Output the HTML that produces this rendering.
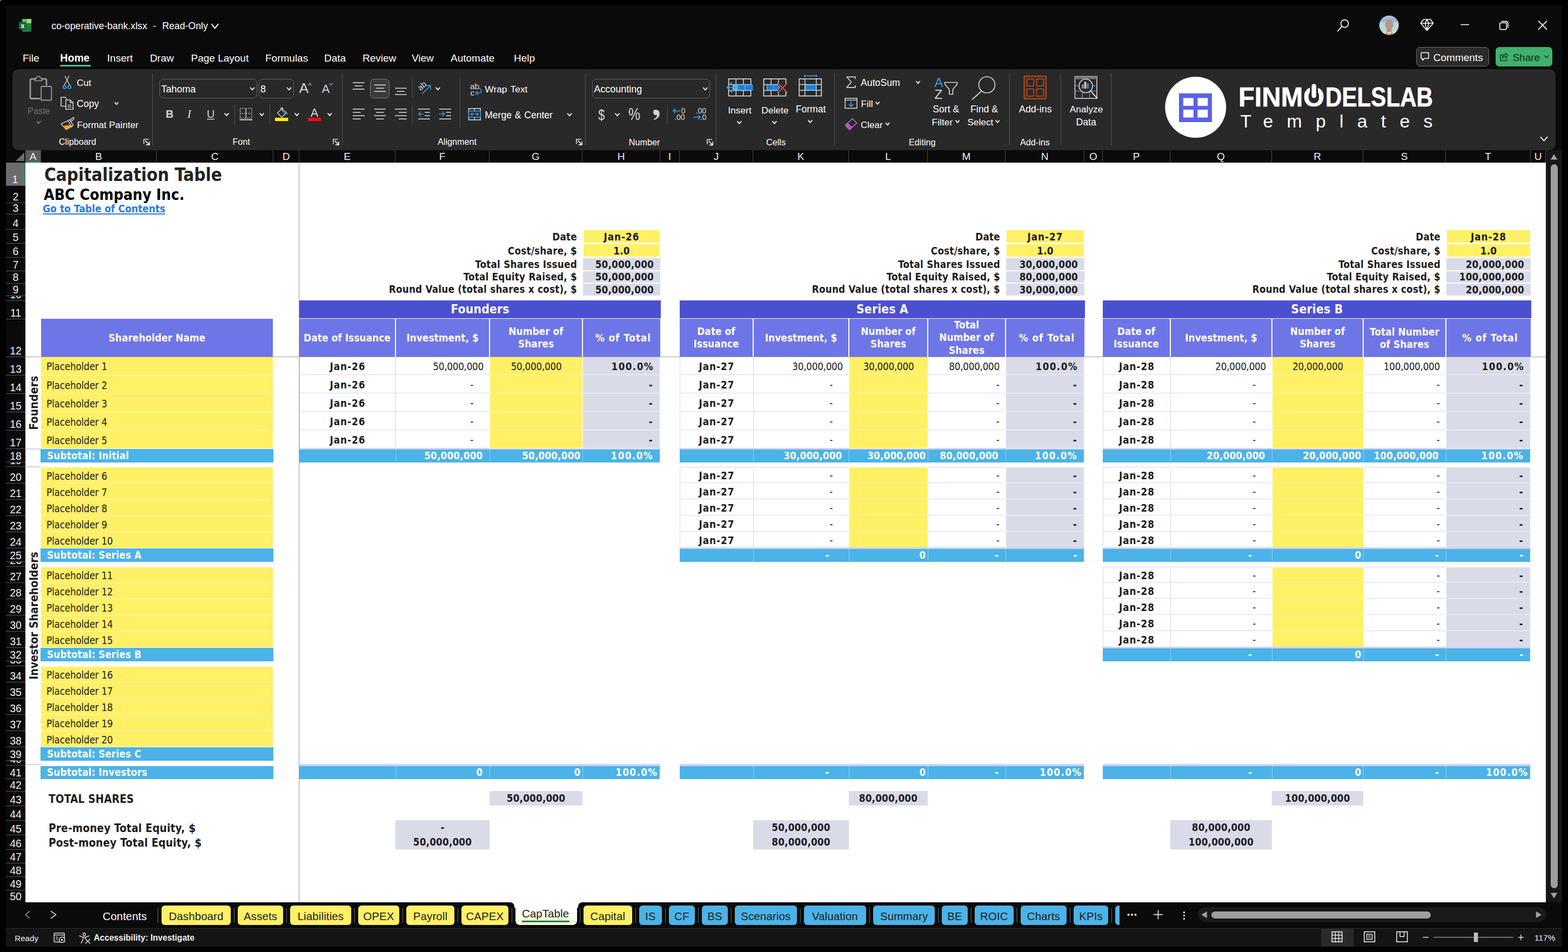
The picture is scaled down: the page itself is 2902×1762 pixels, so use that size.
<!DOCTYPE html>
<html lang="en"><head><meta charset="utf-8"><title>co-operative-bank.xlsx - Excel</title>
<style>
*{box-sizing:border-box;margin:0;padding:0}
html,body{width:2902px;height:1762px;overflow:hidden;background:#000}
body{position:relative;font-family:"Liberation Sans",sans-serif;color:#fff}
.abs{position:absolute}
#win{position:absolute;left:11px;top:10px;width:2880px;height:1742px;background:#0a0a0a;overflow:hidden}
#sheet{position:absolute;left:47px;top:301px;width:2814px;height:1369px;background:#fff;overflow:hidden;font-family:"DejaVu Sans Condensed","DejaVu Sans",sans-serif;font-stretch:condensed;font-size:18.7px;color:#1c1c1c}
.c{position:absolute;display:flex;align-items:center;justify-content:center;white-space:nowrap;line-height:1;overflow:visible;padding-top:4px;letter-spacing:0.2px}
.d{padding-top:5.5px}
.j{letter-spacing:1.0px}
.pc{letter-spacing:1.4px}
.b{font-weight:bold}
.r{justify-content:flex-end}
.l{justify-content:flex-start}
.bot{align-items:flex-end;padding-top:0}
.w{color:#fff}
.n{letter-spacing:-0.25px}
.hd{background:#6e75e7;color:#fff;font-weight:bold;text-align:center;white-space:normal;line-height:23.5px;font-size:18.9px;padding-top:2px;letter-spacing:0.05px}
.yl{background:#fff066}
.gy{background:#d9dbe9}
.bl{background:#4bb3e7;color:#fff;font-weight:bold}
.ch{position:absolute;top:278px;height:23px;color:#f0f0f0;font-size:19px;line-height:23px;text-align:center;border-right:1px solid #4a4a4a}
.rh{position:absolute;left:11px;width:36px;color:#f0f0f0;font-size:19.5px;text-align:center;border-bottom:1px solid #555;overflow:hidden}
.t{position:absolute;white-space:nowrap}
.tab{position:absolute;top:1676px;height:35.5px;border-radius:6px;color:#1c1c1c;font-size:20.4px;line-height:20.4px;text-align:center;padding-top:9.6px;white-space:nowrap;letter-spacing:0.15px}
.rh span{position:absolute;left:0;right:0;bottom:1px;line-height:20px}
</style></head><body>
<div id="win"></div>

<div class="abs" style="left:11px;top:278px;width:2850px;height:23px;background:#0a0a0a"></div>
<div class="ch" style="left:47px;width:29px;background:#5c5c5c;border-bottom:2px solid #1e8f4e;">A</div>
<div class="ch" style="left:76px;width:214px;">B</div>
<div class="ch" style="left:290px;width:216px;">C</div>
<div class="ch" style="left:506px;width:48px;">D</div>
<div class="ch" style="left:554px;width:178px;">E</div>
<div class="ch" style="left:732px;width:174px;">F</div>
<div class="ch" style="left:906px;width:172px;">G</div>
<div class="ch" style="left:1078px;width:144px;">H</div>
<div class="ch" style="left:1222px;width:36px;">I</div>
<div class="ch" style="left:1258px;width:136px;">J</div>
<div class="ch" style="left:1394px;width:177px;">K</div>
<div class="ch" style="left:1571px;width:146px;">L</div>
<div class="ch" style="left:1717px;width:144px;">M</div>
<div class="ch" style="left:1861px;width:146px;">N</div>
<div class="ch" style="left:2007px;width:34px;">O</div>
<div class="ch" style="left:2041px;width:125px;">P</div>
<div class="ch" style="left:2166px;width:188px;">Q</div>
<div class="ch" style="left:2354px;width:169px;">R</div>
<div class="ch" style="left:2523px;width:153px;">S</div>
<div class="ch" style="left:2676px;width:157px;">T</div>
<div class="ch" style="left:2833px;width:28px;">U</div>
<svg class="abs" style="left:28px;top:281px" width="18" height="18"><path d="M17 1 L17 17 L1 17 Z" fill="#6a6a6a"/></svg>
<div class="rh" style="top:301px;height:43px;background:#6b6b6b;border-right:2px solid #1e8f4e;"><span>1</span></div>
<div class="rh" style="top:344px;height:32px;"><span>2</span></div>
<div class="rh" style="top:376px;height:21px;"><span>3</span></div>
<div class="rh" style="top:397px;height:28px;"><span>4</span></div>
<div class="rh" style="top:425px;height:26px;"><span>5</span></div>
<div class="rh" style="top:451px;height:26px;"><span>6</span></div>
<div class="rh" style="top:477px;height:25px;"><span>7</span></div>
<div class="rh" style="top:502px;height:23px;"><span>8</span></div>
<div class="rh" style="top:525px;height:23px;"><span>9</span></div>
<div class="rh" style="top:548px;height:9px;"><span>10</span></div>
<div class="rh" style="top:557px;height:34px;"><span>11</span></div>
<div class="rh" style="top:591px;height:70px;"><span>12</span></div>
<div class="rh" style="top:661px;height:34px;"><span>13</span></div>
<div class="rh" style="top:695px;height:34px;"><span>14</span></div>
<div class="rh" style="top:729px;height:34px;"><span>15</span></div>
<div class="rh" style="top:763px;height:34px;"><span>16</span></div>
<div class="rh" style="top:797px;height:34px;"><span>17</span></div>
<div class="rh" style="top:831px;height:25px;"><span>18</span></div>
<div class="rh" style="top:856px;height:8px;"><span>19</span></div>
<div class="rh" style="top:864px;height:31px;"><span>20</span></div>
<div class="rh" style="top:895px;height:30px;"><span>21</span></div>
<div class="rh" style="top:925px;height:30px;"><span>22</span></div>
<div class="rh" style="top:955px;height:30px;"><span>23</span></div>
<div class="rh" style="top:985px;height:30px;"><span>24</span></div>
<div class="rh" style="top:1015px;height:25px;"><span>25</span></div>
<div class="rh" style="top:1040px;height:9px;"><span>26</span></div>
<div class="rh" style="top:1049px;height:30px;"><span>27</span></div>
<div class="rh" style="top:1079px;height:30px;"><span>28</span></div>
<div class="rh" style="top:1109px;height:30px;"><span>29</span></div>
<div class="rh" style="top:1139px;height:30px;"><span>30</span></div>
<div class="rh" style="top:1169px;height:30px;"><span>31</span></div>
<div class="rh" style="top:1199px;height:25px;"><span>32</span></div>
<div class="rh" style="top:1224px;height:9px;"><span>33</span></div>
<div class="rh" style="top:1233px;height:30px;"><span>34</span></div>
<div class="rh" style="top:1263px;height:30px;"><span>35</span></div>
<div class="rh" style="top:1293px;height:30px;"><span>36</span></div>
<div class="rh" style="top:1323px;height:30px;"><span>37</span></div>
<div class="rh" style="top:1353px;height:30px;"><span>38</span></div>
<div class="rh" style="top:1383px;height:25px;"><span>39</span></div>
<div class="rh" style="top:1408px;height:9px;"><span>40</span></div>
<div class="rh" style="top:1417px;height:25px;"><span>41</span></div>
<div class="rh" style="top:1442px;height:23px;"><span>42</span></div>
<div class="rh" style="top:1465px;height:27px;"><span>43</span></div>
<div class="rh" style="top:1492px;height:27px;"><span>44</span></div>
<div class="rh" style="top:1519px;height:27px;"><span>45</span></div>
<div class="rh" style="top:1546px;height:27px;"><span>46</span></div>
<div class="rh" style="top:1573px;height:25px;"><span>47</span></div>
<div class="rh" style="top:1598px;height:25px;"><span>48</span></div>
<div class="rh" style="top:1623px;height:25px;"><span>49</span></div>
<div class="rh" style="top:1648px;height:23px;"><span>50</span></div>
<div id="sheet">
<div class="c b l bot" style="left:29px;top:0px;width:430px;height:42px;font-size:33px;padding-left:6px;padding-bottom:3px;color:#222;letter-spacing:0">Capitalization Table</div>
<div class="c b l bot" style="left:29px;top:42px;width:430px;height:32px;font-size:28.2px;padding-left:5px;padding-bottom:0px;color:#000;letter-spacing:0.05px">ABC Company Inc.</div>
<div class="c b l bot" style="left:29px;top:74px;width:430px;height:21px;font-size:19.1px;padding-left:3px;color:#2a7ae8;letter-spacing:0"><span style="text-decoration:underline;text-decoration-thickness:2px;text-underline-offset:2px">Go to Table of Contents</span></div>
<div class="c b r bot" style="left:507px;top:123px;width:524px;height:26px;padding-right:10px;padding-bottom:1px;letter-spacing:0.24px">Date</div>
<div class="c b yl bot j" style="left:1033px;top:125px;width:141px;height:23px;padding-bottom:0px">Jan-26</div>
<div class="c b r bot" style="left:507px;top:149px;width:524px;height:26px;padding-right:10px;padding-bottom:1px;letter-spacing:0.24px">Cost/share, $</div>
<div class="c b yl bot" style="left:1033px;top:151px;width:141px;height:23px;padding-bottom:0px">1.0</div>
<div class="c b r bot" style="left:507px;top:175px;width:524px;height:25px;padding-right:10px;padding-bottom:1px;letter-spacing:0.24px">Total Shares Issued</div>
<div class="c b gy r bot" style="left:1032px;top:177px;width:143px;height:22px;padding-right:12px;padding-bottom:0px">50,000,000</div>
<div class="c b r bot" style="left:507px;top:200px;width:524px;height:23px;padding-right:10px;padding-bottom:1px;letter-spacing:0.24px">Total Equity Raised, $</div>
<div class="c b gy r bot" style="left:1032px;top:201px;width:143px;height:21px;padding-right:12px;padding-bottom:0px">50,000,000</div>
<div class="c b r bot" style="left:507px;top:223px;width:524px;height:23px;padding-right:10px;padding-bottom:1px;letter-spacing:0.24px">Round Value (total shares x cost), $</div>
<div class="c b gy r bot" style="left:1032px;top:224px;width:143px;height:21.5px;padding-right:12px;padding-bottom:0px">50,000,000</div>
<div class="c b w" style="left:507px;top:255px;width:668px;height:34px;background:#4b50d0;font-size:22.7px;height:32.5px;padding-top:1px;width:669px">Founders</div>
<div class="c b r bot" style="left:1211px;top:123px;width:603px;height:26px;padding-right:10px;padding-bottom:1px;letter-spacing:0.24px">Date</div>
<div class="c b yl bot j" style="left:1816px;top:125px;width:143px;height:23px;padding-bottom:0px">Jan-27</div>
<div class="c b r bot" style="left:1211px;top:149px;width:603px;height:26px;padding-right:10px;padding-bottom:1px;letter-spacing:0.24px">Cost/share, $</div>
<div class="c b yl bot" style="left:1816px;top:151px;width:143px;height:23px;padding-bottom:0px">1.0</div>
<div class="c b r bot" style="left:1211px;top:175px;width:603px;height:25px;padding-right:10px;padding-bottom:1px;letter-spacing:0.24px">Total Shares Issued</div>
<div class="c b gy r bot" style="left:1815px;top:177px;width:145px;height:22px;padding-right:12px;padding-bottom:0px">30,000,000</div>
<div class="c b r bot" style="left:1211px;top:200px;width:603px;height:23px;padding-right:10px;padding-bottom:1px;letter-spacing:0.24px">Total Equity Raised, $</div>
<div class="c b gy r bot" style="left:1815px;top:201px;width:145px;height:21px;padding-right:12px;padding-bottom:0px">80,000,000</div>
<div class="c b r bot" style="left:1211px;top:223px;width:603px;height:23px;padding-right:10px;padding-bottom:1px;letter-spacing:0.24px">Round Value (total shares x cost), $</div>
<div class="c b gy r bot" style="left:1815px;top:224px;width:145px;height:21.5px;padding-right:12px;padding-bottom:0px">30,000,000</div>
<div class="c b w" style="left:1211px;top:255px;width:749px;height:34px;background:#4b50d0;font-size:22.7px;height:32.5px;padding-top:1px;width:750px">Series A</div>
<div class="c b r bot" style="left:1994px;top:123px;width:635px;height:26px;padding-right:10px;padding-bottom:1px;letter-spacing:0.24px">Date</div>
<div class="c b yl bot j" style="left:2631px;top:125px;width:154px;height:23px;padding-bottom:0px">Jan-28</div>
<div class="c b r bot" style="left:1994px;top:149px;width:635px;height:26px;padding-right:10px;padding-bottom:1px;letter-spacing:0.24px">Cost/share, $</div>
<div class="c b yl bot" style="left:2631px;top:151px;width:154px;height:23px;padding-bottom:0px">1.0</div>
<div class="c b r bot" style="left:1994px;top:175px;width:635px;height:25px;padding-right:10px;padding-bottom:1px;letter-spacing:0.24px">Total Shares Issued</div>
<div class="c b gy r bot" style="left:2630px;top:177px;width:156px;height:22px;padding-right:12px;padding-bottom:0px">20,000,000</div>
<div class="c b r bot" style="left:1994px;top:200px;width:635px;height:23px;padding-right:10px;padding-bottom:1px;letter-spacing:0.24px">Total Equity Raised, $</div>
<div class="c b gy r bot" style="left:2630px;top:201px;width:156px;height:21px;padding-right:12px;padding-bottom:0px">100,000,000</div>
<div class="c b r bot" style="left:1994px;top:223px;width:635px;height:23px;padding-right:10px;padding-bottom:1px;letter-spacing:0.24px">Round Value (total shares x cost), $</div>
<div class="c b gy r bot" style="left:2630px;top:224px;width:156px;height:21.5px;padding-right:12px;padding-bottom:0px">20,000,000</div>
<div class="c b w" style="left:1994px;top:255px;width:792px;height:34px;background:#4b50d0;font-size:22.7px;height:32.5px;padding-top:1px;width:793px">Series B</div>
<div class="c hd" style="left:29px;top:289px;width:429px;height:70px;">Shareholder Name</div>
<div class="c hd" style="left:507px;top:289px;width:177px;height:70px;">Date of Issuance</div>
<div class="c hd" style="left:686px;top:289px;width:172px;height:70px;">Investment, $</div>
<div class="c hd" style="left:860px;top:289px;width:170px;height:70px;padding:0 30px;">Number of Shares</div>
<div class="c hd" style="left:1032px;top:289px;width:142.7px;height:70px;letter-spacing:0.9px;padding-left:6px;">% of Total</div>
<div class="c hd" style="left:1211px;top:289px;width:135px;height:70px;padding:0 22px;">Date of Issuance</div>
<div class="c hd" style="left:1348px;top:289px;width:175px;height:70px;">Investment, $</div>
<div class="c hd" style="left:1525px;top:289px;width:144px;height:70px;padding:0 16px;">Number of Shares</div>
<div class="c hd" style="left:1671px;top:289px;width:142px;height:70px;padding:0 12px;">Total Number of Shares</div>
<div class="c hd" style="left:1815px;top:289px;width:144.7px;height:70px;letter-spacing:0.9px;padding-left:6px;">% of Total</div>
<div class="c hd" style="left:1994px;top:289px;width:124px;height:70px;padding:0 22px;">Date of Issuance</div>
<div class="c hd" style="left:2120px;top:289px;width:186px;height:70px;">Investment, $</div>
<div class="c hd" style="left:2308px;top:289px;width:167px;height:70px;padding:0 30px;">Number of Shares</div>
<div class="c hd" style="left:2477px;top:289px;width:151px;height:70px;">Total Number of Shares</div>
<div class="c hd" style="left:2630px;top:289px;width:155.7px;height:70px;letter-spacing:0.9px;padding-left:6px;">% of Total</div>
<div class="c yl l d" style="left:29px;top:359px;width:429px;height:34px;padding-left:10px;letter-spacing:-0.15px;">Placeholder 1</div>
<div class="c yl l d" style="left:29px;top:393px;width:429px;height:34px;padding-left:10px;letter-spacing:-0.15px;border-top:1px solid #fff9c4;">Placeholder 2</div>
<div class="c yl l d" style="left:29px;top:427px;width:429px;height:34px;padding-left:10px;letter-spacing:-0.15px;border-top:1px solid #fff9c4;">Placeholder 3</div>
<div class="c yl l d" style="left:29px;top:461px;width:429px;height:34px;padding-left:10px;letter-spacing:-0.15px;border-top:1px solid #fff9c4;">Placeholder 4</div>
<div class="c yl l d" style="left:29px;top:495px;width:429px;height:34px;padding-left:10px;letter-spacing:-0.15px;border-top:1px solid #fff9c4;">Placeholder 5</div>
<div class="c yl l d" style="left:29px;top:563.5px;width:429px;height:29.5px;padding-left:10px;letter-spacing:-0.15px;">Placeholder 6</div>
<div class="c yl l d" style="left:29px;top:593px;width:429px;height:30px;padding-left:10px;letter-spacing:-0.15px;border-top:1px solid #fff9c4;">Placeholder 7</div>
<div class="c yl l d" style="left:29px;top:623px;width:429px;height:30px;padding-left:10px;letter-spacing:-0.15px;border-top:1px solid #fff9c4;">Placeholder 8</div>
<div class="c yl l d" style="left:29px;top:653px;width:429px;height:30px;padding-left:10px;letter-spacing:-0.15px;border-top:1px solid #fff9c4;">Placeholder 9</div>
<div class="c yl l d" style="left:29px;top:683px;width:429px;height:30px;padding-left:10px;letter-spacing:-0.15px;border-top:1px solid #fff9c4;">Placeholder 10</div>
<div class="c yl l d" style="left:29px;top:748.5px;width:429px;height:28.5px;padding-left:10px;letter-spacing:-0.15px;">Placeholder 11</div>
<div class="c yl l d" style="left:29px;top:777px;width:429px;height:30px;padding-left:10px;letter-spacing:-0.15px;border-top:1px solid #fff9c4;">Placeholder 12</div>
<div class="c yl l d" style="left:29px;top:807px;width:429px;height:30px;padding-left:10px;letter-spacing:-0.15px;border-top:1px solid #fff9c4;">Placeholder 13</div>
<div class="c yl l d" style="left:29px;top:837px;width:429px;height:30px;padding-left:10px;letter-spacing:-0.15px;border-top:1px solid #fff9c4;">Placeholder 14</div>
<div class="c yl l d" style="left:29px;top:867px;width:429px;height:30px;padding-left:10px;letter-spacing:-0.15px;border-top:1px solid #fff9c4;">Placeholder 15</div>
<div class="c yl l d" style="left:29px;top:932.5px;width:429px;height:28.5px;padding-left:10px;letter-spacing:-0.15px;">Placeholder 16</div>
<div class="c yl l d" style="left:29px;top:961px;width:429px;height:30px;padding-left:10px;letter-spacing:-0.15px;border-top:1px solid #fff9c4;">Placeholder 17</div>
<div class="c yl l d" style="left:29px;top:991px;width:429px;height:30px;padding-left:10px;letter-spacing:-0.15px;border-top:1px solid #fff9c4;">Placeholder 18</div>
<div class="c yl l d" style="left:29px;top:1021px;width:429px;height:30px;padding-left:10px;letter-spacing:-0.15px;border-top:1px solid #fff9c4;">Placeholder 19</div>
<div class="c yl l d" style="left:29px;top:1051px;width:429px;height:30px;padding-left:10px;letter-spacing:-0.15px;border-top:1px solid #fff9c4;">Placeholder 20</div>
<div class="c bl l" style="left:29px;top:530px;width:430px;height:24.5px;padding-left:12px;padding-top:2px;left:28px;width:431px">Subtotal: Initial</div>
<div class="c bl l" style="left:29px;top:714px;width:430px;height:24.5px;padding-left:12px;padding-top:2px;left:28px;width:431px">Subtotal: Series A</div>
<div class="c bl l" style="left:29px;top:898px;width:430px;height:24.5px;padding-left:12px;padding-top:2px;left:28px;width:431px">Subtotal: Series B</div>
<div class="c bl l" style="left:29px;top:1082px;width:430px;height:24.5px;padding-left:12px;padding-top:2px;left:28px;width:431px">Subtotal: Series C</div>
<div class="c bl l" style="left:29px;top:1117px;width:430px;height:23.5px;padding-left:12px;padding-top:2px;left:28px;width:431px">Subtotal: Investors</div>
<div class="c b" style="left:0px;top:359px;width:29px;height:170px;font-size:21px;padding:0px 0 0 3px"><span style="transform:rotate(-90deg);display:block;letter-spacing:0.2px">Founders</span></div>
<div class="c b" style="left:0px;top:562px;width:29px;height:544px;font-size:21px;padding:8px 0 0 3px"><span style="transform:rotate(-90deg);display:block;letter-spacing:0px">Investor Shareholders</span></div>
<div class="c b d j" style="left:507px;top:359px;width:178px;height:34px;border-bottom:1px solid #d6d9ef;border-left:1px solid #d6d9ef;">Jan-26</div>
<div class="c r n d" style="left:685px;top:359px;width:174px;height:34px;border-bottom:1px solid #d6d9ef;border-left:1px solid #d6d9ef;padding-right:11px">50,000,000</div>
<div class="c yl n d" style="left:860px;top:359px;width:171px;height:34px;border-bottom:1px solid #fff9c4">50,000,000</div>
<div class="c gy b r d pc" style="left:1032px;top:359px;width:142px;height:34px;border-bottom:1px solid #f4f5fb;padding-right:11px">100.0%</div>
<div class="c b d j" style="left:1211px;top:359px;width:136px;height:34px;border-bottom:1px solid #d6d9ef;border-left:1px solid #d6d9ef;">Jan-27</div>
<div class="c r n d" style="left:1347px;top:359px;width:177px;height:34px;border-bottom:1px solid #d6d9ef;border-left:1px solid #d6d9ef;padding-right:11px">30,000,000</div>
<div class="c yl n d" style="left:1525px;top:359px;width:145px;height:34px;border-bottom:1px solid #fff9c4">30,000,000</div>
<div class="c r n d" style="left:1670px;top:359px;width:144px;height:34px;border-bottom:1px solid #d6d9ef;padding-right:11px">80,000,000</div>
<div class="c gy b r d pc" style="left:1815px;top:359px;width:144px;height:34px;border-bottom:1px solid #f4f5fb;padding-right:11px">100.0%</div>
<div class="c b d j" style="left:1994px;top:359px;width:125px;height:34px;border-bottom:1px solid #d6d9ef;border-left:1px solid #d6d9ef;">Jan-28</div>
<div class="c r n d" style="left:2119px;top:359px;width:188px;height:34px;border-bottom:1px solid #d6d9ef;border-left:1px solid #d6d9ef;padding-right:11px">20,000,000</div>
<div class="c yl n d" style="left:2308px;top:359px;width:168px;height:34px;border-bottom:1px solid #fff9c4">20,000,000</div>
<div class="c r n d" style="left:2476px;top:359px;width:153px;height:34px;border-bottom:1px solid #d6d9ef;padding-right:11px">100,000,000</div>
<div class="c gy b r d pc" style="left:2630px;top:359px;width:155px;height:34px;border-bottom:1px solid #f4f5fb;padding-right:11px">100.0%</div>
<div class="c b d j" style="left:507px;top:393px;width:178px;height:34px;border-bottom:1px solid #d6d9ef;border-left:1px solid #d6d9ef;">Jan-26</div>
<div class="c r n d" style="left:685px;top:393px;width:174px;height:34px;border-bottom:1px solid #d6d9ef;border-left:1px solid #d6d9ef;padding-right:30px">-</div>
<div class="c yl n d" style="left:860px;top:393px;width:171px;height:34px;border-bottom:1px solid #fff9c4"></div>
<div class="c gy b r d" style="left:1032px;top:393px;width:142px;height:34px;border-bottom:1px solid #f4f5fb;padding-right:13px">-</div>
<div class="c b d j" style="left:1211px;top:393px;width:136px;height:34px;border-bottom:1px solid #d6d9ef;border-left:1px solid #d6d9ef;">Jan-27</div>
<div class="c r n d" style="left:1347px;top:393px;width:177px;height:34px;border-bottom:1px solid #d6d9ef;border-left:1px solid #d6d9ef;padding-right:30px">-</div>
<div class="c yl n d" style="left:1525px;top:393px;width:145px;height:34px;border-bottom:1px solid #fff9c4"></div>
<div class="c r n d" style="left:1670px;top:393px;width:144px;height:34px;border-bottom:1px solid #d6d9ef;padding-right:11.5px">-</div>
<div class="c gy b r d" style="left:1815px;top:393px;width:144px;height:34px;border-bottom:1px solid #f4f5fb;padding-right:13px">-</div>
<div class="c b d j" style="left:1994px;top:393px;width:125px;height:34px;border-bottom:1px solid #d6d9ef;border-left:1px solid #d6d9ef;">Jan-28</div>
<div class="c r n d" style="left:2119px;top:393px;width:188px;height:34px;border-bottom:1px solid #d6d9ef;border-left:1px solid #d6d9ef;padding-right:30px">-</div>
<div class="c yl n d" style="left:2308px;top:393px;width:168px;height:34px;border-bottom:1px solid #fff9c4"></div>
<div class="c r n d" style="left:2476px;top:393px;width:153px;height:34px;border-bottom:1px solid #d6d9ef;padding-right:11.5px">-</div>
<div class="c gy b r d" style="left:2630px;top:393px;width:155px;height:34px;border-bottom:1px solid #f4f5fb;padding-right:13px">-</div>
<div class="c b d j" style="left:507px;top:427px;width:178px;height:34px;border-bottom:1px solid #d6d9ef;border-left:1px solid #d6d9ef;">Jan-26</div>
<div class="c r n d" style="left:685px;top:427px;width:174px;height:34px;border-bottom:1px solid #d6d9ef;border-left:1px solid #d6d9ef;padding-right:30px">-</div>
<div class="c yl n d" style="left:860px;top:427px;width:171px;height:34px;border-bottom:1px solid #fff9c4"></div>
<div class="c gy b r d" style="left:1032px;top:427px;width:142px;height:34px;border-bottom:1px solid #f4f5fb;padding-right:13px">-</div>
<div class="c b d j" style="left:1211px;top:427px;width:136px;height:34px;border-bottom:1px solid #d6d9ef;border-left:1px solid #d6d9ef;">Jan-27</div>
<div class="c r n d" style="left:1347px;top:427px;width:177px;height:34px;border-bottom:1px solid #d6d9ef;border-left:1px solid #d6d9ef;padding-right:30px">-</div>
<div class="c yl n d" style="left:1525px;top:427px;width:145px;height:34px;border-bottom:1px solid #fff9c4"></div>
<div class="c r n d" style="left:1670px;top:427px;width:144px;height:34px;border-bottom:1px solid #d6d9ef;padding-right:11.5px">-</div>
<div class="c gy b r d" style="left:1815px;top:427px;width:144px;height:34px;border-bottom:1px solid #f4f5fb;padding-right:13px">-</div>
<div class="c b d j" style="left:1994px;top:427px;width:125px;height:34px;border-bottom:1px solid #d6d9ef;border-left:1px solid #d6d9ef;">Jan-28</div>
<div class="c r n d" style="left:2119px;top:427px;width:188px;height:34px;border-bottom:1px solid #d6d9ef;border-left:1px solid #d6d9ef;padding-right:30px">-</div>
<div class="c yl n d" style="left:2308px;top:427px;width:168px;height:34px;border-bottom:1px solid #fff9c4"></div>
<div class="c r n d" style="left:2476px;top:427px;width:153px;height:34px;border-bottom:1px solid #d6d9ef;padding-right:11.5px">-</div>
<div class="c gy b r d" style="left:2630px;top:427px;width:155px;height:34px;border-bottom:1px solid #f4f5fb;padding-right:13px">-</div>
<div class="c b d j" style="left:507px;top:461px;width:178px;height:34px;border-bottom:1px solid #d6d9ef;border-left:1px solid #d6d9ef;">Jan-26</div>
<div class="c r n d" style="left:685px;top:461px;width:174px;height:34px;border-bottom:1px solid #d6d9ef;border-left:1px solid #d6d9ef;padding-right:30px">-</div>
<div class="c yl n d" style="left:860px;top:461px;width:171px;height:34px;border-bottom:1px solid #fff9c4"></div>
<div class="c gy b r d" style="left:1032px;top:461px;width:142px;height:34px;border-bottom:1px solid #f4f5fb;padding-right:13px">-</div>
<div class="c b d j" style="left:1211px;top:461px;width:136px;height:34px;border-bottom:1px solid #d6d9ef;border-left:1px solid #d6d9ef;">Jan-27</div>
<div class="c r n d" style="left:1347px;top:461px;width:177px;height:34px;border-bottom:1px solid #d6d9ef;border-left:1px solid #d6d9ef;padding-right:30px">-</div>
<div class="c yl n d" style="left:1525px;top:461px;width:145px;height:34px;border-bottom:1px solid #fff9c4"></div>
<div class="c r n d" style="left:1670px;top:461px;width:144px;height:34px;border-bottom:1px solid #d6d9ef;padding-right:11.5px">-</div>
<div class="c gy b r d" style="left:1815px;top:461px;width:144px;height:34px;border-bottom:1px solid #f4f5fb;padding-right:13px">-</div>
<div class="c b d j" style="left:1994px;top:461px;width:125px;height:34px;border-bottom:1px solid #d6d9ef;border-left:1px solid #d6d9ef;">Jan-28</div>
<div class="c r n d" style="left:2119px;top:461px;width:188px;height:34px;border-bottom:1px solid #d6d9ef;border-left:1px solid #d6d9ef;padding-right:30px">-</div>
<div class="c yl n d" style="left:2308px;top:461px;width:168px;height:34px;border-bottom:1px solid #fff9c4"></div>
<div class="c r n d" style="left:2476px;top:461px;width:153px;height:34px;border-bottom:1px solid #d6d9ef;padding-right:11.5px">-</div>
<div class="c gy b r d" style="left:2630px;top:461px;width:155px;height:34px;border-bottom:1px solid #f4f5fb;padding-right:13px">-</div>
<div class="c b d j" style="left:507px;top:495px;width:178px;height:34px;border-bottom:1px solid #d6d9ef;border-left:1px solid #d6d9ef;">Jan-26</div>
<div class="c r n d" style="left:685px;top:495px;width:174px;height:34px;border-bottom:1px solid #d6d9ef;border-left:1px solid #d6d9ef;padding-right:30px">-</div>
<div class="c yl n d" style="left:860px;top:495px;width:171px;height:34px;border-bottom:1px solid #fff9c4"></div>
<div class="c gy b r d" style="left:1032px;top:495px;width:142px;height:34px;border-bottom:1px solid #f4f5fb;padding-right:13px">-</div>
<div class="c b d j" style="left:1211px;top:495px;width:136px;height:34px;border-bottom:1px solid #d6d9ef;border-left:1px solid #d6d9ef;">Jan-27</div>
<div class="c r n d" style="left:1347px;top:495px;width:177px;height:34px;border-bottom:1px solid #d6d9ef;border-left:1px solid #d6d9ef;padding-right:30px">-</div>
<div class="c yl n d" style="left:1525px;top:495px;width:145px;height:34px;border-bottom:1px solid #fff9c4"></div>
<div class="c r n d" style="left:1670px;top:495px;width:144px;height:34px;border-bottom:1px solid #d6d9ef;padding-right:11.5px">-</div>
<div class="c gy b r d" style="left:1815px;top:495px;width:144px;height:34px;border-bottom:1px solid #f4f5fb;padding-right:13px">-</div>
<div class="c b d j" style="left:1994px;top:495px;width:125px;height:34px;border-bottom:1px solid #d6d9ef;border-left:1px solid #d6d9ef;">Jan-28</div>
<div class="c r n d" style="left:2119px;top:495px;width:188px;height:34px;border-bottom:1px solid #d6d9ef;border-left:1px solid #d6d9ef;padding-right:30px">-</div>
<div class="c yl n d" style="left:2308px;top:495px;width:168px;height:34px;border-bottom:1px solid #fff9c4"></div>
<div class="c r n d" style="left:2476px;top:495px;width:153px;height:34px;border-bottom:1px solid #d6d9ef;padding-right:11.5px">-</div>
<div class="c gy b r d" style="left:2630px;top:495px;width:155px;height:34px;border-bottom:1px solid #f4f5fb;padding-right:13px">-</div>
<div class="c bl r" style="left:507px;top:531px;width:178px;height:23.5px;padding-right:12.0px;padding-top:2px;"></div>
<div class="c bl r" style="left:685px;top:531px;width:174px;height:23.5px;padding-right:12.5px;border-left:1px solid #8fd0f0;padding-top:2px;">50,000,000</div>
<div class="c bl r" style="left:859px;top:531px;width:172px;height:23.5px;padding-right:3.5px;border-left:1px solid #8fd0f0;padding-top:2px;">50,000,000</div>
<div class="c bl r pc" style="left:1031px;top:531px;width:143px;height:23.5px;padding-right:12.0px;border-left:1px solid #8fd0f0;padding-top:2px;">100.0%</div>
<div class="c bl r" style="left:1211px;top:531px;width:136px;height:23.5px;padding-right:12.0px;padding-top:2px;"></div>
<div class="c bl r" style="left:1347px;top:531px;width:177px;height:23.5px;padding-right:12.5px;border-left:1px solid #8fd0f0;padding-top:2px;">30,000,000</div>
<div class="c bl r" style="left:1524px;top:531px;width:146px;height:23.5px;padding-right:3.5px;border-left:1px solid #8fd0f0;padding-top:2px;">30,000,000</div>
<div class="c bl r" style="left:1670px;top:531px;width:144px;height:23.5px;padding-right:13.3px;border-left:1px solid #8fd0f0;padding-top:2px;">80,000,000</div>
<div class="c bl r pc" style="left:1814px;top:531px;width:145px;height:23.5px;padding-right:12.0px;border-left:1px solid #8fd0f0;padding-top:2px;">100.0%</div>
<div class="c bl r" style="left:1994px;top:531px;width:125px;height:23.5px;padding-right:12.0px;padding-top:2px;"></div>
<div class="c bl r" style="left:2119px;top:531px;width:188px;height:23.5px;padding-right:12.5px;border-left:1px solid #8fd0f0;padding-top:2px;">20,000,000</div>
<div class="c bl r" style="left:2307px;top:531px;width:169px;height:23.5px;padding-right:3.5px;border-left:1px solid #8fd0f0;padding-top:2px;">20,000,000</div>
<div class="c bl r" style="left:2476px;top:531px;width:153px;height:23.5px;padding-right:13.3px;border-left:1px solid #8fd0f0;padding-top:2px;">100,000,000</div>
<div class="c bl r pc" style="left:2629px;top:531px;width:156px;height:23.5px;padding-right:12.0px;border-left:1px solid #8fd0f0;padding-top:2px;">100.0%</div>
<div class="c b d j" style="left:1211px;top:563px;width:136px;height:30px;border-bottom:1px solid #d6d9ef;border-left:1px solid #d6d9ef;border-top:1px solid #d6d9ef;">Jan-27</div>
<div class="c r n d" style="left:1347px;top:563px;width:177px;height:30px;border-bottom:1px solid #d6d9ef;border-left:1px solid #d6d9ef;border-top:1px solid #d6d9ef;padding-right:30px">-</div>
<div class="c yl n d" style="left:1525px;top:564px;width:145px;height:29px;border-bottom:1px solid #fff9c4"></div>
<div class="c r n d" style="left:1670px;top:563px;width:144px;height:30px;border-bottom:1px solid #d6d9ef;border-top:1px solid #d6d9ef;padding-right:11.5px">-</div>
<div class="c gy b r d" style="left:1815px;top:564px;width:144px;height:29px;border-bottom:1px solid #f4f5fb;padding-right:13px">-</div>
<div class="c b d j" style="left:1994px;top:563px;width:125px;height:30px;border-bottom:1px solid #d6d9ef;border-left:1px solid #d6d9ef;border-top:1px solid #d6d9ef;">Jan-28</div>
<div class="c r n d" style="left:2119px;top:563px;width:188px;height:30px;border-bottom:1px solid #d6d9ef;border-left:1px solid #d6d9ef;border-top:1px solid #d6d9ef;padding-right:30px">-</div>
<div class="c yl n d" style="left:2308px;top:564px;width:168px;height:29px;border-bottom:1px solid #fff9c4"></div>
<div class="c r n d" style="left:2476px;top:563px;width:153px;height:30px;border-bottom:1px solid #d6d9ef;border-top:1px solid #d6d9ef;padding-right:11.5px">-</div>
<div class="c gy b r d" style="left:2630px;top:564px;width:155px;height:29px;border-bottom:1px solid #f4f5fb;padding-right:13px">-</div>
<div class="c b d j" style="left:1211px;top:593px;width:136px;height:30px;border-bottom:1px solid #d6d9ef;border-left:1px solid #d6d9ef;">Jan-27</div>
<div class="c r n d" style="left:1347px;top:593px;width:177px;height:30px;border-bottom:1px solid #d6d9ef;border-left:1px solid #d6d9ef;padding-right:30px">-</div>
<div class="c yl n d" style="left:1525px;top:593px;width:145px;height:30px;border-bottom:1px solid #fff9c4"></div>
<div class="c r n d" style="left:1670px;top:593px;width:144px;height:30px;border-bottom:1px solid #d6d9ef;padding-right:11.5px">-</div>
<div class="c gy b r d" style="left:1815px;top:593px;width:144px;height:30px;border-bottom:1px solid #f4f5fb;padding-right:13px">-</div>
<div class="c b d j" style="left:1994px;top:593px;width:125px;height:30px;border-bottom:1px solid #d6d9ef;border-left:1px solid #d6d9ef;">Jan-28</div>
<div class="c r n d" style="left:2119px;top:593px;width:188px;height:30px;border-bottom:1px solid #d6d9ef;border-left:1px solid #d6d9ef;padding-right:30px">-</div>
<div class="c yl n d" style="left:2308px;top:593px;width:168px;height:30px;border-bottom:1px solid #fff9c4"></div>
<div class="c r n d" style="left:2476px;top:593px;width:153px;height:30px;border-bottom:1px solid #d6d9ef;padding-right:11.5px">-</div>
<div class="c gy b r d" style="left:2630px;top:593px;width:155px;height:30px;border-bottom:1px solid #f4f5fb;padding-right:13px">-</div>
<div class="c b d j" style="left:1211px;top:623px;width:136px;height:30px;border-bottom:1px solid #d6d9ef;border-left:1px solid #d6d9ef;">Jan-27</div>
<div class="c r n d" style="left:1347px;top:623px;width:177px;height:30px;border-bottom:1px solid #d6d9ef;border-left:1px solid #d6d9ef;padding-right:30px">-</div>
<div class="c yl n d" style="left:1525px;top:623px;width:145px;height:30px;border-bottom:1px solid #fff9c4"></div>
<div class="c r n d" style="left:1670px;top:623px;width:144px;height:30px;border-bottom:1px solid #d6d9ef;padding-right:11.5px">-</div>
<div class="c gy b r d" style="left:1815px;top:623px;width:144px;height:30px;border-bottom:1px solid #f4f5fb;padding-right:13px">-</div>
<div class="c b d j" style="left:1994px;top:623px;width:125px;height:30px;border-bottom:1px solid #d6d9ef;border-left:1px solid #d6d9ef;">Jan-28</div>
<div class="c r n d" style="left:2119px;top:623px;width:188px;height:30px;border-bottom:1px solid #d6d9ef;border-left:1px solid #d6d9ef;padding-right:30px">-</div>
<div class="c yl n d" style="left:2308px;top:623px;width:168px;height:30px;border-bottom:1px solid #fff9c4"></div>
<div class="c r n d" style="left:2476px;top:623px;width:153px;height:30px;border-bottom:1px solid #d6d9ef;padding-right:11.5px">-</div>
<div class="c gy b r d" style="left:2630px;top:623px;width:155px;height:30px;border-bottom:1px solid #f4f5fb;padding-right:13px">-</div>
<div class="c b d j" style="left:1211px;top:653px;width:136px;height:30px;border-bottom:1px solid #d6d9ef;border-left:1px solid #d6d9ef;">Jan-27</div>
<div class="c r n d" style="left:1347px;top:653px;width:177px;height:30px;border-bottom:1px solid #d6d9ef;border-left:1px solid #d6d9ef;padding-right:30px">-</div>
<div class="c yl n d" style="left:1525px;top:653px;width:145px;height:30px;border-bottom:1px solid #fff9c4"></div>
<div class="c r n d" style="left:1670px;top:653px;width:144px;height:30px;border-bottom:1px solid #d6d9ef;padding-right:11.5px">-</div>
<div class="c gy b r d" style="left:1815px;top:653px;width:144px;height:30px;border-bottom:1px solid #f4f5fb;padding-right:13px">-</div>
<div class="c b d j" style="left:1994px;top:653px;width:125px;height:30px;border-bottom:1px solid #d6d9ef;border-left:1px solid #d6d9ef;">Jan-28</div>
<div class="c r n d" style="left:2119px;top:653px;width:188px;height:30px;border-bottom:1px solid #d6d9ef;border-left:1px solid #d6d9ef;padding-right:30px">-</div>
<div class="c yl n d" style="left:2308px;top:653px;width:168px;height:30px;border-bottom:1px solid #fff9c4"></div>
<div class="c r n d" style="left:2476px;top:653px;width:153px;height:30px;border-bottom:1px solid #d6d9ef;padding-right:11.5px">-</div>
<div class="c gy b r d" style="left:2630px;top:653px;width:155px;height:30px;border-bottom:1px solid #f4f5fb;padding-right:13px">-</div>
<div class="c b d j" style="left:1211px;top:683px;width:136px;height:30px;border-bottom:1px solid #d6d9ef;border-left:1px solid #d6d9ef;">Jan-27</div>
<div class="c r n d" style="left:1347px;top:683px;width:177px;height:30px;border-bottom:1px solid #d6d9ef;border-left:1px solid #d6d9ef;padding-right:30px">-</div>
<div class="c yl n d" style="left:1525px;top:683px;width:145px;height:30px;border-bottom:1px solid #fff9c4"></div>
<div class="c r n d" style="left:1670px;top:683px;width:144px;height:30px;border-bottom:1px solid #d6d9ef;padding-right:11.5px">-</div>
<div class="c gy b r d" style="left:1815px;top:683px;width:144px;height:30px;border-bottom:1px solid #f4f5fb;padding-right:13px">-</div>
<div class="c b d j" style="left:1994px;top:683px;width:125px;height:30px;border-bottom:1px solid #d6d9ef;border-left:1px solid #d6d9ef;">Jan-28</div>
<div class="c r n d" style="left:2119px;top:683px;width:188px;height:30px;border-bottom:1px solid #d6d9ef;border-left:1px solid #d6d9ef;padding-right:30px">-</div>
<div class="c yl n d" style="left:2308px;top:683px;width:168px;height:30px;border-bottom:1px solid #fff9c4"></div>
<div class="c r n d" style="left:2476px;top:683px;width:153px;height:30px;border-bottom:1px solid #d6d9ef;padding-right:11.5px">-</div>
<div class="c gy b r d" style="left:2630px;top:683px;width:155px;height:30px;border-bottom:1px solid #f4f5fb;padding-right:13px">-</div>
<div class="c bl r" style="left:1211px;top:715px;width:136px;height:23.5px;padding-right:12.0px;padding-top:2px;"></div>
<div class="c bl r" style="left:1347px;top:715px;width:177px;height:23.5px;padding-right:36.6px;border-left:1px solid #8fd0f0;padding-top:2px;">-</div>
<div class="c bl r" style="left:1524px;top:715px;width:146px;height:23.5px;padding-right:3.5px;border-left:1px solid #8fd0f0;padding-top:2px;">0</div>
<div class="c bl r" style="left:1670px;top:715px;width:144px;height:23.5px;padding-right:12.9px;border-left:1px solid #8fd0f0;padding-top:2px;">-</div>
<div class="c bl r" style="left:1814px;top:715px;width:145px;height:23.5px;padding-right:12.6px;border-left:1px solid #8fd0f0;padding-top:2px;">-</div>
<div class="c bl r" style="left:1994px;top:715px;width:125px;height:23.5px;padding-right:12.0px;padding-top:2px;"></div>
<div class="c bl r" style="left:2119px;top:715px;width:188px;height:23.5px;padding-right:36.6px;border-left:1px solid #8fd0f0;padding-top:2px;">-</div>
<div class="c bl r" style="left:2307px;top:715px;width:169px;height:23.5px;padding-right:3.5px;border-left:1px solid #8fd0f0;padding-top:2px;">0</div>
<div class="c bl r" style="left:2476px;top:715px;width:153px;height:23.5px;padding-right:12.9px;border-left:1px solid #8fd0f0;padding-top:2px;">-</div>
<div class="c bl r" style="left:2629px;top:715px;width:156px;height:23.5px;padding-right:12.6px;border-left:1px solid #8fd0f0;padding-top:2px;">-</div>
<div class="c b d j" style="left:1994px;top:748px;width:125px;height:29px;border-bottom:1px solid #d6d9ef;border-left:1px solid #d6d9ef;border-top:1px solid #d6d9ef;">Jan-28</div>
<div class="c r n d" style="left:2119px;top:748px;width:188px;height:29px;border-bottom:1px solid #d6d9ef;border-left:1px solid #d6d9ef;border-top:1px solid #d6d9ef;padding-right:30px">-</div>
<div class="c yl n d" style="left:2308px;top:749px;width:168px;height:28px;border-bottom:1px solid #fff9c4"></div>
<div class="c r n d" style="left:2476px;top:748px;width:153px;height:29px;border-bottom:1px solid #d6d9ef;border-top:1px solid #d6d9ef;padding-right:11.5px">-</div>
<div class="c gy b r d" style="left:2630px;top:749px;width:155px;height:28px;border-bottom:1px solid #f4f5fb;padding-right:13px">-</div>
<div class="c b d j" style="left:1994px;top:777px;width:125px;height:30px;border-bottom:1px solid #d6d9ef;border-left:1px solid #d6d9ef;">Jan-28</div>
<div class="c r n d" style="left:2119px;top:777px;width:188px;height:30px;border-bottom:1px solid #d6d9ef;border-left:1px solid #d6d9ef;padding-right:30px">-</div>
<div class="c yl n d" style="left:2308px;top:777px;width:168px;height:30px;border-bottom:1px solid #fff9c4"></div>
<div class="c r n d" style="left:2476px;top:777px;width:153px;height:30px;border-bottom:1px solid #d6d9ef;padding-right:11.5px">-</div>
<div class="c gy b r d" style="left:2630px;top:777px;width:155px;height:30px;border-bottom:1px solid #f4f5fb;padding-right:13px">-</div>
<div class="c b d j" style="left:1994px;top:807px;width:125px;height:30px;border-bottom:1px solid #d6d9ef;border-left:1px solid #d6d9ef;">Jan-28</div>
<div class="c r n d" style="left:2119px;top:807px;width:188px;height:30px;border-bottom:1px solid #d6d9ef;border-left:1px solid #d6d9ef;padding-right:30px">-</div>
<div class="c yl n d" style="left:2308px;top:807px;width:168px;height:30px;border-bottom:1px solid #fff9c4"></div>
<div class="c r n d" style="left:2476px;top:807px;width:153px;height:30px;border-bottom:1px solid #d6d9ef;padding-right:11.5px">-</div>
<div class="c gy b r d" style="left:2630px;top:807px;width:155px;height:30px;border-bottom:1px solid #f4f5fb;padding-right:13px">-</div>
<div class="c b d j" style="left:1994px;top:837px;width:125px;height:30px;border-bottom:1px solid #d6d9ef;border-left:1px solid #d6d9ef;">Jan-28</div>
<div class="c r n d" style="left:2119px;top:837px;width:188px;height:30px;border-bottom:1px solid #d6d9ef;border-left:1px solid #d6d9ef;padding-right:30px">-</div>
<div class="c yl n d" style="left:2308px;top:837px;width:168px;height:30px;border-bottom:1px solid #fff9c4"></div>
<div class="c r n d" style="left:2476px;top:837px;width:153px;height:30px;border-bottom:1px solid #d6d9ef;padding-right:11.5px">-</div>
<div class="c gy b r d" style="left:2630px;top:837px;width:155px;height:30px;border-bottom:1px solid #f4f5fb;padding-right:13px">-</div>
<div class="c b d j" style="left:1994px;top:867px;width:125px;height:30px;border-bottom:1px solid #d6d9ef;border-left:1px solid #d6d9ef;">Jan-28</div>
<div class="c r n d" style="left:2119px;top:867px;width:188px;height:30px;border-bottom:1px solid #d6d9ef;border-left:1px solid #d6d9ef;padding-right:30px">-</div>
<div class="c yl n d" style="left:2308px;top:867px;width:168px;height:30px;border-bottom:1px solid #fff9c4"></div>
<div class="c r n d" style="left:2476px;top:867px;width:153px;height:30px;border-bottom:1px solid #d6d9ef;padding-right:11.5px">-</div>
<div class="c gy b r d" style="left:2630px;top:867px;width:155px;height:30px;border-bottom:1px solid #f4f5fb;padding-right:13px">-</div>
<div class="c bl r" style="left:1994px;top:899px;width:125px;height:23.5px;padding-right:12.0px;padding-top:2px;"></div>
<div class="c bl r" style="left:2119px;top:899px;width:188px;height:23.5px;padding-right:36.6px;border-left:1px solid #8fd0f0;padding-top:2px;">-</div>
<div class="c bl r" style="left:2307px;top:899px;width:169px;height:23.5px;padding-right:3.5px;border-left:1px solid #8fd0f0;padding-top:2px;">0</div>
<div class="c bl r" style="left:2476px;top:899px;width:153px;height:23.5px;padding-right:12.9px;border-left:1px solid #8fd0f0;padding-top:2px;">-</div>
<div class="c bl r" style="left:2629px;top:899px;width:156px;height:23.5px;padding-right:12.6px;border-left:1px solid #8fd0f0;padding-top:2px;">-</div>
<div class="c bl r" style="left:507px;top:1117px;width:178px;height:23.5px;padding-right:3.4px;padding-top:2px;"></div>
<div class="c bl r" style="left:685px;top:1117px;width:174px;height:23.5px;padding-right:12.5px;border-left:1px solid #8fd0f0;padding-top:2px;">0</div>
<div class="c bl r" style="left:859px;top:1117px;width:172px;height:23.5px;padding-right:3.5px;border-left:1px solid #8fd0f0;padding-top:2px;">0</div>
<div class="c bl r pc" style="left:1031px;top:1117px;width:143px;height:23.5px;padding-right:3.4px;border-left:1px solid #8fd0f0;padding-top:2px;">100.0%</div>
<div class="c bl r" style="left:1211px;top:1117px;width:136px;height:23.5px;padding-right:3.4px;padding-top:2px;"></div>
<div class="c bl r" style="left:1347px;top:1117px;width:177px;height:23.5px;padding-right:36.6px;border-left:1px solid #8fd0f0;padding-top:2px;">-</div>
<div class="c bl r" style="left:1524px;top:1117px;width:146px;height:23.5px;padding-right:3.5px;border-left:1px solid #8fd0f0;padding-top:2px;">0</div>
<div class="c bl r" style="left:1670px;top:1117px;width:144px;height:23.5px;padding-right:12.9px;border-left:1px solid #8fd0f0;padding-top:2px;">-</div>
<div class="c bl r pc" style="left:1814px;top:1117px;width:145px;height:23.5px;padding-right:3.4px;border-left:1px solid #8fd0f0;padding-top:2px;">100.0%</div>
<div class="c bl r" style="left:1994px;top:1117px;width:125px;height:23.5px;padding-right:3.4px;padding-top:2px;"></div>
<div class="c bl r" style="left:2119px;top:1117px;width:188px;height:23.5px;padding-right:36.6px;border-left:1px solid #8fd0f0;padding-top:2px;">-</div>
<div class="c bl r" style="left:2307px;top:1117px;width:169px;height:23.5px;padding-right:3.5px;border-left:1px solid #8fd0f0;padding-top:2px;">0</div>
<div class="c bl r" style="left:2476px;top:1117px;width:153px;height:23.5px;padding-right:12.9px;border-left:1px solid #8fd0f0;padding-top:2px;">-</div>
<div class="c bl r pc" style="left:2629px;top:1117px;width:156px;height:23.5px;padding-right:3.4px;border-left:1px solid #8fd0f0;padding-top:2px;">100.0%</div>
<div class="abs" style="left:507px;top:528.5px;width:668px;height:2.5px;background:#cfd2f1"></div>
<div class="abs" style="left:507px;top:1113px;width:668px;height:4px;background:#cfd2f1"></div>
<div class="abs" style="left:1211px;top:528.5px;width:749px;height:2.5px;background:#cfd2f1"></div>
<div class="abs" style="left:1211px;top:1113px;width:749px;height:4px;background:#cfd2f1"></div>
<div class="abs" style="left:1994px;top:528.5px;width:792px;height:2.5px;background:#cfd2f1"></div>
<div class="abs" style="left:1994px;top:1113px;width:792px;height:4px;background:#cfd2f1"></div>
<div class="abs" style="left:1211px;top:712px;width:749px;height:2.5px;background:#cfd2f1"></div>
<div class="abs" style="left:1994px;top:712px;width:792px;height:2.5px;background:#cfd2f1"></div>
<div class="abs" style="left:1994px;top:896px;width:792px;height:2.5px;background:#cfd2f1"></div>
<div class="abs" style="left:0px;top:528.5px;width:29px;height:2.5px;background:#cfd2f1"></div>
<div class="abs" style="left:0px;top:561.5px;width:29px;height:2.5px;background:#cfd2f1"></div>
<div class="abs" style="left:0px;top:1112.5px;width:29px;height:2.5px;background:#cfd2f1"></div>
<div class="c b l" style="left:29px;top:1163px;width:430px;height:27px;padding-left:14px;font-size:20.6px">TOTAL SHARES</div>
<div class="c b l" style="left:29px;top:1217px;width:430px;height:27px;padding-left:14px;font-size:20.6px">Pre-money Total Equity, $</div>
<div class="c b l" style="left:29px;top:1244px;width:430px;height:27px;padding-left:14px;font-size:20.6px">Post-money Total Equity, $</div>
<div class="c b gy" style="left:859px;top:1163px;width:172px;height:27px;padding-top:2px">50,000,000</div>
<div class="c b gy" style="left:1524px;top:1163px;width:146px;height:27px;padding-top:2px">80,000,000</div>
<div class="c b gy" style="left:2307px;top:1163px;width:169px;height:27px;padding-top:2px">100,000,000</div>
<div class="c gy" style="left:685px;top:1217px;width:174px;height:54px;"></div>
<div class="c b" style="left:685px;top:1217px;width:174px;height:27px;padding-top:2px">-</div>
<div class="c b" style="left:685px;top:1244px;width:174px;height:27px;padding-top:2px">50,000,000</div>
<div class="c gy" style="left:1347px;top:1217px;width:177px;height:54px;"></div>
<div class="c b" style="left:1347px;top:1217px;width:177px;height:27px;padding-top:2px">50,000,000</div>
<div class="c b" style="left:1347px;top:1244px;width:177px;height:27px;padding-top:2px">80,000,000</div>
<div class="c gy" style="left:2119px;top:1217px;width:188px;height:54px;"></div>
<div class="c b" style="left:2119px;top:1217px;width:188px;height:27px;padding-top:2px">80,000,000</div>
<div class="c b" style="left:2119px;top:1244px;width:188px;height:27px;padding-top:2px">100,000,000</div>
<div class="abs" style="left:506px;top:0;width:1px;height:1369px;background:#9c9c9c"></div>
<div class="abs" style="left:0;top:359px;width:2814px;height:1px;background:#9c9c9c"></div>
</div>
<div class="t" style="left:95.3px;top:40.3px;font-size:17.7px;line-height:17.7px;color:#fff;word-spacing:0.6px">co-operative-bank.xlsx &nbsp;- &nbsp;Read-Only</div>
<div class="t" style="left:42.0px;top:97.6px;font-size:19px;line-height:19px;color:#fff;">File</div>
<div class="t" style="left:198.3px;top:97.6px;font-size:19px;line-height:19px;color:#fff;">Insert</div>
<div class="t" style="left:277.4px;top:97.6px;font-size:19px;line-height:19px;color:#fff;">Draw</div>
<div class="t" style="left:353.5px;top:97.6px;font-size:19px;line-height:19px;color:#fff;">Page Layout</div>
<div class="t" style="left:491.0px;top:97.6px;font-size:19px;line-height:19px;color:#fff;">Formulas</div>
<div class="t" style="left:600.0px;top:97.6px;font-size:19px;line-height:19px;color:#fff;">Data</div>
<div class="t" style="left:671.0px;top:97.6px;font-size:19px;line-height:19px;color:#fff;">Review</div>
<div class="t" style="left:762.0px;top:97.6px;font-size:19px;line-height:19px;color:#fff;">View</div>
<div class="t" style="left:834.0px;top:97.6px;font-size:19px;line-height:19px;color:#fff;">Automate</div>
<div class="t" style="left:951.0px;top:97.6px;font-size:19px;line-height:19px;color:#fff;">Help</div>
<div class="t" style="left:111.3px;top:98.0px;font-size:19.6px;line-height:19.6px;color:#fff;font-weight:bold;">Home</div>
<div class="abs" style="left:2621px;top:87px;width:135px;height:36px;border:1px solid #6b6b6b;border-radius:7px;background:#2b2b2b"></div>
<div class="t" style="left:2652.8px;top:96.8px;font-size:19px;line-height:19px;color:#fff;">Comments</div>
<div class="abs" style="left:2768px;top:87px;width:105px;height:36px;border-radius:7px;background:#41b06d"></div>
<div class="t" style="left:2799.4px;top:96.8px;font-size:19px;line-height:19px;color:#0b2e1a;">Share</div>
<div class="abs" style="left:23px;top:128px;width:2855.5px;height:150px;border-radius:12px;background:#292929"></div>
<div class="t" style="left:-128.2px;width:400px;text-align:center;top:197.0px;font-size:16.2px;line-height:16.2px;color:#707070;">Paste</div>
<div class="t" style="left:142.0px;top:144.9px;font-size:17.2px;line-height:17.2px;color:#fff;">Cut</div>
<div class="t" style="left:142.0px;top:183.8px;font-size:17.6px;line-height:17.6px;color:#fff;">Copy</div>
<div class="t" style="left:142.6px;top:223.4px;font-size:17.2px;line-height:17.2px;color:#fff;">Format Painter</div>
<div class="t" style="left:109.0px;top:254.1px;font-size:16.1px;line-height:16.1px;color:#fff;">Clipboard</div>
<div class="abs" style="left:295px;top:146px;width:181px;height:36px;border:1px solid #616161;border-radius:7px"></div>
<div class="t" style="left:298.3px;top:155.8px;font-size:18px;line-height:18px;color:#fff;">Tahoma</div>
<div class="abs" style="left:479px;top:146px;width:65px;height:36px;border:1px solid #616161;border-radius:7px"></div>
<div class="t" style="left:482.0px;top:155.8px;font-size:18px;line-height:18px;color:#fff;">8</div>
<div class="t" style="left:553.5px;top:150.2px;font-size:26.5px;line-height:26.5px;color:#d6d6d6;">A</div>
<div class="t" style="left:595.5px;top:154.0px;font-size:22px;line-height:22px;color:#d6d6d6;">A</div>
<div class="t" style="left:306.8px;top:201.4px;font-size:20px;line-height:20px;color:#d6d6d6;font-weight:bold;">B</div>
<div class="t" style="left:346.5px;top:201.4px;font-size:20px;line-height:20px;color:#d6d6d6;font-style:italic;font-family:&quot;Liberation Serif&quot;,serif;font-size:22px">I</div>
<div class="t" style="left:382.8px;top:201.4px;font-size:20px;line-height:20px;color:#d6d6d6;">U</div>
<div class="t" style="left:382.0px;width:400px;text-align:center;top:199.2px;font-size:21.5px;line-height:21.5px;color:#d6d6d6;">A</div>
<div class="t" style="left:430.5px;top:254.0px;font-size:16.1px;line-height:16.1px;color:#fff;">Font</div>
<div class="abs" style="left:685px;top:146px;width:36px;height:36px;border:1px solid #7d7d7d;border-radius:7px;background:#3b3b3b"></div>
<div class="t" style="left:771px;top:151px;font-size:15px;line-height:15px;color:#d6d6d6;transform:rotate(-45deg);transform-origin:left bottom;left:779.5px;top:155px">ab</div>
<div class="t" style="left:870.0px;top:152.4px;font-size:15.5px;line-height:15.5px;color:#d6d6d6;">ab</div>
<div class="t" style="left:870.5px;top:163.7px;font-size:15.5px;line-height:15.5px;color:#d6d6d6;">c</div>
<div class="t" style="left:897.3px;top:157.0px;font-size:17.4px;line-height:17.4px;color:#fff;word-spacing:1.5px">Wrap Text</div>
<div class="t" style="left:897.3px;top:204.5px;font-size:17.5px;line-height:17.5px;color:#fff;word-spacing:1px">Merge &amp; Center</div>
<div class="t" style="left:810.0px;top:254.2px;font-size:16.2px;line-height:16.2px;color:#fff;">Alignment</div>
<div class="abs" style="left:1096px;top:146px;width:218px;height:36px;border:1px solid #616161;border-radius:7px"></div>
<div class="t" style="left:1099.3px;top:155.6px;font-size:18px;line-height:18px;color:#fff;">Accounting</div>
<div class="t" style="left:1106.5px;top:198.7px;font-size:27.5px;line-height:27.5px;color:#d6d6d6;transform:scaleX(0.8);transform-origin:left">$</div>
<div class="t" style="left:1163.0px;top:196.2px;font-size:31px;line-height:31px;color:#d6d6d6;transform:scaleX(0.8);transform-origin:left">%</div>
<div class="t" style="left:1260.5px;top:198.0px;font-size:14px;line-height:14px;color:#d6d6d6;">0</div>
<div class="t" style="left:1248.2px;top:210.4px;font-size:14px;line-height:14px;color:#d6d6d6;">.00</div>
<div class="t" style="left:1287.5px;top:198.0px;font-size:14px;line-height:14px;color:#d6d6d6;">.00</div>
<div class="t" style="left:1295.6px;top:210.4px;font-size:14px;line-height:14px;color:#d6d6d6;">.0</div>
<div class="t" style="left:1163.8px;top:254.6px;font-size:16.2px;line-height:16.2px;color:#fff;">Number</div>
<div class="t" style="left:1169.0px;width:400px;text-align:center;top:196.0px;font-size:17.4px;line-height:17.4px;color:#fff;">Insert</div>
<div class="t" style="left:1234.3px;width:400px;text-align:center;top:196.0px;font-size:17.4px;line-height:17.4px;color:#fff;">Delete</div>
<div class="t" style="left:1300.6px;width:400px;text-align:center;top:193.9px;font-size:17.6px;line-height:17.6px;color:#fff;">Format</div>
<div class="t" style="left:1418.0px;top:255.0px;font-size:16.2px;line-height:16.2px;color:#fff;">Cells</div>
<div class="t" style="left:1593.0px;top:145.0px;font-size:17.7px;line-height:17.7px;color:#fff;">AutoSum</div>
<div class="t" style="left:1593.6px;top:183.7px;font-size:17.2px;line-height:17.2px;color:#fff;">Fill</div>
<div class="t" style="left:1593.0px;top:223.4px;font-size:17.0px;line-height:17.0px;color:#fff;">Clear</div>
<div class="t" style="left:1729.6px;top:140.7px;font-size:24px;line-height:24px;color:#3a96dd;">A</div>
<div class="t" style="left:1729.6px;top:162.7px;font-size:24px;line-height:24px;color:#d6d6d6;">Z</div>
<div class="t" style="left:1550.8px;width:400px;text-align:center;top:193.8px;font-size:17.7px;line-height:17.7px;color:#fff;">Sort &amp;</div>
<div class="t" style="left:1724.6px;top:218.0px;font-size:17.4px;line-height:17.4px;color:#fff;">Filter</div>
<div class="t" style="left:1621.5px;width:400px;text-align:center;top:193.8px;font-size:17.7px;line-height:17.7px;color:#fff;">Find &amp;</div>
<div class="t" style="left:1790.5px;top:218.1px;font-size:17.2px;line-height:17.2px;color:#fff;">Select</div>
<div class="t" style="left:1682.0px;top:254.9px;font-size:16.2px;line-height:16.2px;color:#fff;">Editing</div>
<div class="t" style="left:1716.3px;width:400px;text-align:center;top:193.6px;font-size:17.9px;line-height:17.9px;color:#fff;">Add-ins</div>
<div class="t" style="left:1888.0px;top:254.9px;font-size:16.2px;line-height:16.2px;color:#fff;">Add-ins</div>
<div class="t" style="left:1810.6px;width:400px;text-align:center;top:194.2px;font-size:17.3px;line-height:17.3px;color:#fff;">Analyze</div>
<div class="t" style="left:1810.2px;width:400px;text-align:center;top:217.7px;font-size:17.7px;line-height:17.7px;color:#fff;">Data</div>
<div class="t" style="left:2291.8px;font-size:49.6px;line-height:50px;font-weight:bold;color:#fff;transform-origin:left top;-webkit-text-stroke:0.7px #fff;top:155.1px;transform:scaleX(0.985)">FINM</div>
<div class="t" style="left:2411.5px;font-size:49.6px;line-height:50px;font-weight:bold;color:#fff;transform-origin:left top;-webkit-text-stroke:0.7px #fff;top:155.1px;transform:scaleX(1.02)">O</div>
<div class="t" style="left:2452.5px;font-size:49.6px;line-height:50px;font-weight:bold;color:#fff;transform-origin:left top;-webkit-text-stroke:0.7px #fff;top:155.1px;transform:scaleX(0.85)">DELSLAB</div>
<div class="t" style="left:2295.4px;top:207.4px;font-size:33.8px;line-height:34px;color:#fff;letter-spacing:25.25px">Templates</div>
<div class="abs" style="left:11px;top:1670px;width:2880px;height:48px;background:#fff"></div>
<div class="abs" style="left:11px;top:1680px;width:2880px;height:38px;background:#0a0a0a"></div>
<div class="abs" style="left:11px;top:1670px;width:940.5px;height:20px;background:#0a0a0a;border-top-right-radius:8px"></div>
<div class="abs" style="left:1070px;top:1670px;width:1821px;height:20px;background:#0a0a0a;border-top-left-radius:8px"></div>
<div class="t" style="left:190.0px;top:1685.5px;font-size:20.4px;line-height:20.4px;color:#fff;">Contents</div>
<div class="tab" style="left:299.0px;width:128.0px;background:#fff066">Dashboard</div>
<div class="tab" style="left:440.3px;width:83.7px;background:#fff066">Assets</div>
<div class="tab" style="left:537.0px;width:112.8px;background:#fff066">Liabilities</div>
<div class="tab" style="left:663.0px;width:75.6px;background:#fff066">OPEX</div>
<div class="tab" style="left:752.0px;width:89.0px;background:#fff066">Payroll</div>
<div class="tab" style="left:854.0px;width:86.7px;background:#fff066">CAPEX</div>
<div class="tab" style="left:1079.8px;width:90.1px;background:#fff066">Capital</div>
<div class="tab" style="left:1182.9px;width:41.8px;background:#4bb3e7">IS</div>
<div class="tab" style="left:1238.0px;width:47.6px;background:#4bb3e7">CF</div>
<div class="tab" style="left:1299.0px;width:47.8px;background:#4bb3e7">BS</div>
<div class="tab" style="left:1359.8px;width:114.9px;background:#4bb3e7">Scenarios</div>
<div class="tab" style="left:1488.0px;width:114.5px;background:#4bb3e7">Valuation</div>
<div class="tab" style="left:1616.3px;width:113.7px;background:#4bb3e7">Summary</div>
<div class="tab" style="left:1743.3px;width:47.5px;background:#4bb3e7">BE</div>
<div class="tab" style="left:1804.2px;width:71.4px;background:#4bb3e7">ROIC</div>
<div class="tab" style="left:1888.7px;width:85.3px;background:#4bb3e7">Charts</div>
<div class="tab" style="left:1987.4px;width:63.5px;background:#4bb3e7">KPIs</div>
<div class="abs" style="left:954px;top:1668px;width:113.6px;height:43.5px;border-radius:0 0 8px 8px;background:linear-gradient(#ffffff 30%,#fffad1)"></div>
<div class="t" style="left:966.0px;top:1680.9px;font-size:20.6px;line-height:20.6px;color:#1c1c1c;">CapTable</div>
<div class="abs" style="left:2063.9px;top:1676px;width:8.2px;height:35.5px;background:#4bb3e7;border-radius:6px 0 0 6px"></div>
<div class="abs" style="left:2216.5px;top:1679px;width:644px;height:28px;border-radius:14px;background:#1a1a1a"></div>
<div class="abs" style="left:2241.6px;top:1686.6px;width:406.6px;height:13px;border-radius:6.5px;background:#9f9f9f"></div>
<div class="abs" style="left:11px;top:1718px;width:2880px;height:34px;background:#141414;border-top:1px solid #2c2c2c"></div>
<div class="t" style="left:27.2px;top:1728.5px;font-size:15.2px;line-height:15.2px;color:#f0f0f0;">Ready</div>
<div class="t" style="left:173.6px;top:1728.2px;font-size:15.6px;line-height:15.6px;color:#f0f0f0;font-weight:bold;">Accessibility: Investigate</div>
<div class="abs" style="left:2445px;top:1719px;width:60px;height:33px;background:#2a2a2a"></div>
<div class="t" style="left:2840.0px;top:1728.4px;font-size:15.5px;line-height:15.5px;color:#f0f0f0;">117%</div>
<div class="abs" style="left:2861px;top:278px;width:30px;height:1392px;background:#171717"></div>
<div class="abs" style="left:2869.6px;top:304px;width:13px;height:1340px;border-radius:6.5px;background:#9f9f9f"></div>
<svg class="abs" style="left:0;top:0;pointer-events:none" width="2902" height="1762" viewBox="0 0 2902 1762">
<g><rect x="41" y="35" width="17" height="24" rx="2" fill="#1f7a3f"/><rect x="41" y="35" width="17" height="8" rx="2" fill="#5fc061"/><rect x="49.5" y="35" width="8.5" height="8" rx="2" fill="#9fe07a"/><rect x="41" y="43" width="8.5" height="8" fill="#2e9e52"/><rect x="49.5" y="43" width="8.5" height="8" fill="#267f45"/><rect x="35" y="40.5" width="14" height="14" rx="2" fill="#176b37"/></g>
<text x="42" y="51.6" text-anchor="middle" font-family="Liberation Sans, sans-serif" font-weight="bold" font-size="12.5" fill="#fff">x</text>
<polyline points="391.9,44.8 397.8,52.3 403.6,44.8" fill="none" stroke="#fff" stroke-width="1.9" stroke-linecap="round" stroke-linejoin="round"/>
<circle cx="2488.6" cy="43.6" r="7" fill="none" stroke="#fff" stroke-width="1.7"/>
<line x1="2483.6" y1="48.8" x2="2476.0" y2="57.5" stroke="#fff" stroke-width="1.8" stroke-linecap="round"/>
<defs><clipPath id="av"><circle cx="2570.8" cy="46.7" r="18"/></clipPath><linearGradient id="avbg" x1="0" y1="0" x2="0" y2="1"><stop offset="0" stop-color="#a9bde0"/><stop offset="0.3" stop-color="#9db3d6"/><stop offset="0.36" stop-color="#b4dadd"/><stop offset="1" stop-color="#b9d8d8"/></linearGradient></defs><g clip-path="url(#av)"><rect x="2552" y="28" width="38" height="38" fill="url(#avbg)"/><ellipse cx="2571" cy="64" rx="15" ry="9" fill="#d9cfc2"/><rect x="2566.5" y="50" width="9" height="9" fill="#b98f78"/><ellipse cx="2571" cy="45" rx="7.8" ry="9.6" fill="#b99684"/><path d="M2565 60 L2571 64 L2577 60 L2577 66 L2565 66Z" fill="#a98570"/></g>
<path d="M2634.5,36 H2647.5 L2652.5,43 L2641,56.5 L2629.5,43 Z M2629.5,43 H2652.5 M2637.5,43 L2641,36.3 L2644.5,43 L2641,56 Z" fill="none" stroke="#fff" stroke-width="1.6" stroke-linejoin="round" stroke-linecap="round" />
<line x1="2703.5" y1="45.6" x2="2718.8" y2="45.6" stroke="#fff" stroke-width="1.6" stroke-linecap="butt"/>
<rect x="2775.8" y="42.2" width="12.4" height="12.4" fill="none" stroke="#fff" stroke-width="1.6" rx="2.5" />
<path d="M2779.2,39.6 H2786.5 Q2790.8,39.6 2790.8,43.9 V51.2" fill="none" stroke="#fff" stroke-width="1.6" stroke-linejoin="round" stroke-linecap="round" />
<line x1="2847.4" y1="39.2" x2="2862.6" y2="54.4" stroke="#fff" stroke-width="1.7" stroke-linecap="round"/>
<line x1="2862.6" y1="39.2" x2="2847.4" y2="54.4" stroke="#fff" stroke-width="1.7" stroke-linecap="round"/>
<rect x="111" y="120" width="57.6" height="3.2" rx="1.6" fill="#56b881"/>
<path d="M2630.2,97.6 H2644 V108 H2636.5 L2632.8,111.6 V108 H2630.2 Z" fill="none" stroke="#fff" stroke-width="1.5" stroke-linejoin="round" stroke-linecap="round" />
<path d="M2781.5,101.5 H2777 V112.2 H2789 V109.5" fill="none" stroke="#0d3a20" stroke-width="1.5" stroke-linejoin="round" stroke-linecap="round" />
<path d="M2780.5,108 Q2781,101.5 2786.3,101.3 V98 L2791,102.8 L2786.3,107.4 V104.4 Q2782.5,104.2 2780.5,108 Z" fill="none" stroke="#0d3a20" stroke-width="1.4" stroke-linejoin="round" stroke-linecap="round" />
<polyline points="2859.1,103.3 2862.3,107.0 2865.5,103.3" fill="none" stroke="#0b2e1a" stroke-width="1.7" stroke-linecap="round" stroke-linejoin="round"/>
<path d="M66,146.2 H58.5 Q56,146.2 56,148.7 V180 Q56,182.5 58.5,182.5 H73.5" fill="none" stroke="#9a9a9a" stroke-width="2.8" stroke-linejoin="round" stroke-linecap="round" />
<path d="M77.5,146.2 H83.5 Q86,146.2 86,148.7 V157" fill="none" stroke="#9a9a9a" stroke-width="2.8" stroke-linejoin="round" stroke-linecap="round" />
<path d="M64,149.5 V146 Q64,144.5 65.5,144.5 H67.5 Q68,141.2 71,141.2 Q74,141.2 74.5,144.5 H76.5 Q78,144.5 78,146 V149.5 Z" fill="none" stroke="#9a9a9a" stroke-width="1.6" stroke-linejoin="round" stroke-linecap="round" />
<rect x="76.2" y="160.0" width="19.0" height="25.5" fill="none" stroke="#9a9a9a" stroke-width="1.8" rx="1" />
<polyline points="68.2,224.5 71.5,228.6 74.8,224.5" fill="none" stroke="#7c7c7c" stroke-width="1.7" stroke-linecap="round" stroke-linejoin="round"/>
<line x1="120.2" y1="141.0" x2="129.2" y2="158.0" stroke="#d6d6d6" stroke-width="1.4" stroke-linecap="round"/>
<line x1="127.8" y1="141.0" x2="118.8" y2="158.0" stroke="#d6d6d6" stroke-width="1.4" stroke-linecap="round"/>
<circle cx="119.4" cy="161" r="2.7" fill="none" stroke="#3a96dd" stroke-width="2"/><circle cx="128.6" cy="161" r="2.7" fill="none" stroke="#3a96dd" stroke-width="2"/>
<path d="M121.5,196.5 H113 V180 H120.5 L123.5,183" fill="none" stroke="#d6d6d6" stroke-width="1.6" stroke-linejoin="round" stroke-linecap="round" />
<path d="M121.8,185 H130 L135.2,190.2 V202.2 H121.8 Z M130,185 V190.2 H135.2" fill="none" stroke="#d6d6d6" stroke-width="1.6" stroke-linejoin="round" stroke-linecap="round" />
<line x1="125.0" y1="194.6" x2="132.0" y2="194.6" stroke="#d6d6d6" stroke-width="1.4" stroke-linecap="butt"/>
<line x1="125.0" y1="198.0" x2="132.0" y2="198.0" stroke="#d6d6d6" stroke-width="1.4" stroke-linecap="butt"/>
<polyline points="212.5,189.6 215.5,193.4 218.5,189.6" fill="none" stroke="#e6e6e6" stroke-width="1.8" stroke-linecap="round" stroke-linejoin="round"/>
<path d="M113,229.2 L126,223.4 L132.8,234.4 L122.8,240 Z" fill="none" stroke="#f0d9a8" stroke-width="1.4" stroke-linejoin="round" stroke-linecap="round" />
<path d="M117.2,233.6 L131,231.4 L132.8,234.4 L122.8,240 Z" fill="#e8a33a" stroke="#e8a33a" stroke-width="1" stroke-linejoin="round" stroke-linecap="round" />
<path d="M126,223.4 L128.8,221.4 L135.6,232 L132.8,234.4" fill="none" stroke="#d6d6d6" stroke-width="1.4" stroke-linejoin="round" stroke-linecap="round" />
<path d="M129.6,222.6 L134.2,218 Q135.6,217 136.6,218.4 Q137.4,219.8 136.2,220.8 L131.4,225" fill="none" stroke="#d6d6d6" stroke-width="1.5" stroke-linejoin="round" stroke-linecap="round" />
<path d="M274.5,257.8 H266.3 V266.0" fill="none" stroke="#e0e0e0" stroke-width="1.6" stroke-linejoin="round" stroke-linecap="round" />
<path d="M269.5,261 L276.5,268 M276.5,262.5 V268 H271.0" fill="none" stroke="#e0e0e0" stroke-width="1.8" stroke-linejoin="round" stroke-linecap="round" />
<line x1="282.3" y1="135.0" x2="282.3" y2="269.0" stroke="#4d4d4d" stroke-width="1.2" stroke-linecap="butt"/>
<polyline points="463.7,162.6 467.0,166.4 470.3,162.6" fill="none" stroke="#e6e6e6" stroke-width="2.0" stroke-linecap="round" stroke-linejoin="round"/>
<polyline points="531.7,162.6 535.0,166.4 538.3,162.6" fill="none" stroke="#e6e6e6" stroke-width="2.0" stroke-linecap="round" stroke-linejoin="round"/>
<polyline points="570.9,157.8 573.5,153.8 576.1,157.8" fill="none" stroke="#3a96dd" stroke-width="1.8" stroke-linecap="round" stroke-linejoin="round"/>
<polyline points="609.9,154.3 612.5,157.3 615.1,154.3" fill="none" stroke="#3a96dd" stroke-width="1.8" stroke-linecap="round" stroke-linejoin="round"/>
<line x1="383.0" y1="220.6" x2="397.0" y2="220.6" stroke="#d6d6d6" stroke-width="1.5" stroke-linecap="butt"/>
<polyline points="416.1,210.1 419.5,214.0 422.9,210.1" fill="none" stroke="#e6e6e6" stroke-width="2.0" stroke-linecap="round" stroke-linejoin="round"/>
<line x1="434.4" y1="193.7" x2="434.4" y2="229.5" stroke="#4d4d4d" stroke-width="1.2" stroke-linecap="butt"/>
<rect x="444.5" y="200.5" width="21.5" height="18" fill="none" stroke="#d6d6d6" stroke-width="1.6" stroke-dasharray="1.7 1.9"/>
<line x1="455.2" y1="201.0" x2="455.2" y2="218.5" stroke="#d6d6d6" stroke-width="1.4" stroke-linecap="butt"/>
<line x1="444.5" y1="210" x2="466" y2="210" stroke="#d6d6d6" stroke-width="1.4" stroke-dasharray="1.7 1.9"/>
<line x1="443.6" y1="221.6" x2="467.0" y2="221.6" stroke="#d6d6d6" stroke-width="2" stroke-linecap="butt"/>
<polyline points="481.1,210.1 484.5,214.0 487.9,210.1" fill="none" stroke="#e6e6e6" stroke-width="2.0" stroke-linecap="round" stroke-linejoin="round"/>
<line x1="499.5" y1="193.7" x2="499.5" y2="229.5" stroke="#4d4d4d" stroke-width="1.2" stroke-linecap="butt"/>
<path d="M521.5,201.2 L529.5,209.2 L521.5,217 L513.5,209.2 Z" fill="none" stroke="#d6d6d6" stroke-width="1.5" stroke-linejoin="round" stroke-linecap="round" />
<path d="M519.8,203 V200.5 Q519.8,199.3 521,199.3 H522 Q523.2,199.3 523.2,200.5 V206" fill="none" stroke="#d6d6d6" stroke-width="1.3" stroke-linejoin="round" stroke-linecap="round" />
<path d="M526,206.3 Q531,204.2 531.8,212 Q529.5,208 526,209 Z" fill="#3a96dd" stroke="#3a96dd" stroke-width="1" stroke-linejoin="round" stroke-linecap="round" />
<rect x="509.0" y="218.0" width="24.2" height="6.0" fill="#fff100" stroke="none" stroke-width="1.5" rx="0" />
<polyline points="546.1,210.1 549.3,214.0 552.5,210.1" fill="none" stroke="#e6e6e6" stroke-width="2.0" stroke-linecap="round" stroke-linejoin="round"/>
<rect x="570.0" y="218.0" width="24.2" height="6.0" fill="#f40d0d" stroke="none" stroke-width="1.5" rx="0" />
<polyline points="606.9,210.1 610.2,214.0 613.5,210.1" fill="none" stroke="#e6e6e6" stroke-width="2.0" stroke-linecap="round" stroke-linejoin="round"/>
<path d="M625,257.8 H616.8 V266" fill="none" stroke="#e0e0e0" stroke-width="1.6" stroke-linejoin="round" stroke-linecap="round" />
<path d="M620,261 L627,268 M627,262.5 V268 H621.5" fill="none" stroke="#e0e0e0" stroke-width="1.8" stroke-linejoin="round" stroke-linecap="round" />
<line x1="633.5" y1="135.0" x2="633.5" y2="269.0" stroke="#4d4d4d" stroke-width="1.2" stroke-linecap="butt"/>
<line x1="652.8" y1="153.0" x2="674.8" y2="153.0" stroke="#d6d6d6" stroke-width="1.6" stroke-linecap="butt"/>
<line x1="656.5" y1="159.0" x2="671.0" y2="159.0" stroke="#d6d6d6" stroke-width="1.6" stroke-linecap="butt"/>
<line x1="652.8" y1="165.0" x2="674.8" y2="165.0" stroke="#d6d6d6" stroke-width="1.6" stroke-linecap="butt"/>
<line x1="692.5" y1="157.3" x2="714.0" y2="157.3" stroke="#d6d6d6" stroke-width="1.6" stroke-linecap="butt"/>
<line x1="696.0" y1="163.3" x2="710.5" y2="163.3" stroke="#d6d6d6" stroke-width="1.6" stroke-linecap="butt"/>
<line x1="692.5" y1="169.2" x2="714.0" y2="169.2" stroke="#d6d6d6" stroke-width="1.6" stroke-linecap="butt"/>
<line x1="730.8" y1="163.3" x2="752.8" y2="163.3" stroke="#d6d6d6" stroke-width="1.6" stroke-linecap="butt"/>
<line x1="734.5" y1="169.2" x2="749.0" y2="169.2" stroke="#d6d6d6" stroke-width="1.6" stroke-linecap="butt"/>
<line x1="730.8" y1="175.0" x2="752.8" y2="175.0" stroke="#d6d6d6" stroke-width="1.6" stroke-linecap="butt"/>
<line x1="763.3" y1="146.5" x2="763.3" y2="181.0" stroke="#4d4d4d" stroke-width="1.2" stroke-linecap="butt"/>
<line x1="781.5" y1="173.5" x2="796.5" y2="158.5" stroke="#3a96dd" stroke-width="1.7" stroke-linecap="round"/>
<path d="M789.5,158.2 H796.8 V165.5" fill="none" stroke="#3a96dd" stroke-width="1.7" stroke-linejoin="round" stroke-linecap="round" />
<polyline points="807.1,162.5 810.4,166.2 813.7,162.5" fill="none" stroke="#e6e6e6" stroke-width="2.0" stroke-linecap="round" stroke-linejoin="round"/>
<line x1="851.4" y1="143.7" x2="851.4" y2="238.0" stroke="#4d4d4d" stroke-width="1.2" stroke-linecap="butt"/>
<path d="M886,164 Q891.5,164.5 890.8,169 Q890,172.2 885.5,172 H880.5 M884,168.6 L880.2,172 L884,175.4" fill="none" stroke="#3a96dd" stroke-width="1.7" stroke-linejoin="round" stroke-linecap="round" />
<line x1="652.8" y1="201.9" x2="674.8" y2="201.9" stroke="#d6d6d6" stroke-width="1.6" stroke-linecap="butt"/>
<line x1="692.5" y1="201.9" x2="714.0" y2="201.9" stroke="#d6d6d6" stroke-width="1.6" stroke-linecap="butt"/>
<line x1="730.8" y1="201.9" x2="752.8" y2="201.9" stroke="#d6d6d6" stroke-width="1.6" stroke-linecap="butt"/>
<line x1="652.8" y1="208.0" x2="667.5" y2="208.0" stroke="#d6d6d6" stroke-width="1.6" stroke-linecap="butt"/>
<line x1="696.0" y1="208.0" x2="710.5" y2="208.0" stroke="#d6d6d6" stroke-width="1.6" stroke-linecap="butt"/>
<line x1="738.0" y1="208.0" x2="752.8" y2="208.0" stroke="#d6d6d6" stroke-width="1.6" stroke-linecap="butt"/>
<line x1="652.8" y1="214.2" x2="674.8" y2="214.2" stroke="#d6d6d6" stroke-width="1.6" stroke-linecap="butt"/>
<line x1="692.5" y1="214.2" x2="714.0" y2="214.2" stroke="#d6d6d6" stroke-width="1.6" stroke-linecap="butt"/>
<line x1="730.8" y1="214.2" x2="752.8" y2="214.2" stroke="#d6d6d6" stroke-width="1.6" stroke-linecap="butt"/>
<line x1="652.8" y1="220.2" x2="667.5" y2="220.2" stroke="#d6d6d6" stroke-width="1.6" stroke-linecap="butt"/>
<line x1="696.0" y1="220.2" x2="710.5" y2="220.2" stroke="#d6d6d6" stroke-width="1.6" stroke-linecap="butt"/>
<line x1="738.0" y1="220.2" x2="752.8" y2="220.2" stroke="#d6d6d6" stroke-width="1.6" stroke-linecap="butt"/>
<line x1="763.3" y1="194.0" x2="763.3" y2="230.5" stroke="#4d4d4d" stroke-width="1.2" stroke-linecap="butt"/>
<line x1="773.7" y1="201.9" x2="795.7" y2="201.9" stroke="#d6d6d6" stroke-width="1.6" stroke-linecap="butt"/>
<line x1="773.7" y1="220.2" x2="795.7" y2="220.2" stroke="#d6d6d6" stroke-width="1.6" stroke-linecap="butt"/>
<line x1="786.2" y1="208.0" x2="795.7" y2="208.0" stroke="#d6d6d6" stroke-width="1.6" stroke-linecap="butt"/>
<line x1="786.2" y1="214.2" x2="795.7" y2="214.2" stroke="#d6d6d6" stroke-width="1.6" stroke-linecap="butt"/>
<line x1="813.0" y1="201.9" x2="835.0" y2="201.9" stroke="#d6d6d6" stroke-width="1.6" stroke-linecap="butt"/>
<line x1="813.0" y1="220.2" x2="835.0" y2="220.2" stroke="#d6d6d6" stroke-width="1.6" stroke-linecap="butt"/>
<line x1="825.5" y1="208.0" x2="835.0" y2="208.0" stroke="#d6d6d6" stroke-width="1.6" stroke-linecap="butt"/>
<line x1="825.5" y1="214.2" x2="835.0" y2="214.2" stroke="#d6d6d6" stroke-width="1.6" stroke-linecap="butt"/>
<path d="M783.5,211 H774.6 M778.2,207.4 L774.6,211 L778.2,214.6" fill="none" stroke="#3a96dd" stroke-width="1.7" stroke-linejoin="round" stroke-linecap="round" />
<path d="M813.4,211 H822.4 M818.8,207.4 L822.4,211 L818.8,214.6" fill="none" stroke="#3a96dd" stroke-width="1.7" stroke-linejoin="round" stroke-linecap="round" />
<rect x="867.5" y="200.8" width="21.6" height="21.0" fill="none" stroke="#d6d6d6" stroke-width="1.6" rx="0" />
<rect x="867.5" y="205.6" width="21.6" height="11.4" fill="#292929" stroke="#3a96dd" stroke-width="1.7" rx="0" />
<line x1="878.3" y1="200.8" x2="878.3" y2="205.6" stroke="#d6d6d6" stroke-width="1.4" stroke-linecap="butt"/>
<line x1="878.3" y1="217.0" x2="878.3" y2="221.8" stroke="#d6d6d6" stroke-width="1.4" stroke-linecap="butt"/>
<path d="M871.2,211.3 H885.4 M874,208.5 L871.2,211.3 L874,214.1 M882.6,208.5 L885.4,211.3 L882.6,214.1" fill="none" stroke="#3a96dd" stroke-width="1.5" stroke-linejoin="round" stroke-linecap="round" />
<polyline points="1050.7,210.5 1054.1,214.3 1057.5,210.5" fill="none" stroke="#e6e6e6" stroke-width="2.0" stroke-linecap="round" stroke-linejoin="round"/>
<path d="M1075,257.8 H1066.8 V266" fill="none" stroke="#e0e0e0" stroke-width="1.6" stroke-linejoin="round" stroke-linecap="round" />
<path d="M1070,261 L1077,268 M1077,262.5 V268 H1071.5" fill="none" stroke="#e0e0e0" stroke-width="1.8" stroke-linejoin="round" stroke-linecap="round" />
<line x1="1083.4" y1="135.0" x2="1083.4" y2="269.0" stroke="#4d4d4d" stroke-width="1.2" stroke-linecap="butt"/>
<polyline points="1301.9,162.6 1305.3,166.6 1308.7,162.6" fill="none" stroke="#e6e6e6" stroke-width="2.0" stroke-linecap="round" stroke-linejoin="round"/>
<polyline points="1139.1,210.3 1142.5,214.4 1145.9,210.3" fill="none" stroke="#e6e6e6" stroke-width="2.0" stroke-linecap="round" stroke-linejoin="round"/>
<path d="M1213.2,203 Q1220.8,203 1220.8,210.5 Q1220.8,218.5 1211,222 L1210,220.3 Q1216,217.5 1216.2,213.3 Q1209,213.5 1209,208 Q1209,203 1213.2,203 Z" fill="#d6d6d6"/>
<line x1="1235.3" y1="194.0" x2="1235.3" y2="230.0" stroke="#4d4d4d" stroke-width="1.2" stroke-linecap="butt"/>
<path d="M1258,205.4 H1245.8 M1249.6,201.6 L1245.8,205.4 L1249.6,209.2" fill="none" stroke="#3a96dd" stroke-width="1.7" stroke-linejoin="round" stroke-linecap="round" />
<path d="M1284.4,216.9 H1296 M1292.2,213.1 L1296,216.9 L1292.2,220.7" fill="none" stroke="#3a96dd" stroke-width="1.7" stroke-linejoin="round" stroke-linecap="round" />
<path d="M1317,258.3 H1308.8 V266.5" fill="none" stroke="#e0e0e0" stroke-width="1.6" stroke-linejoin="round" stroke-linecap="round" />
<path d="M1312,261.5 L1319,268.5 M1319,263.0 V268.5 H1313.5" fill="none" stroke="#e0e0e0" stroke-width="1.8" stroke-linejoin="round" stroke-linecap="round" />
<line x1="1325.5" y1="135.0" x2="1325.5" y2="269.0" stroke="#4d4d4d" stroke-width="1.2" stroke-linecap="butt"/>
<rect x="1348.6" y="146.0" width="41.0" height="31.6" fill="none" stroke="#d6d6d6" stroke-width="1.7" rx="0" />
<line x1="1362.2" y1="146.0" x2="1362.2" y2="177.6" stroke="#d6d6d6" stroke-width="1.5" stroke-linecap="butt"/>
<line x1="1375.8" y1="146.0" x2="1375.8" y2="177.6" stroke="#d6d6d6" stroke-width="1.5" stroke-linecap="butt"/>
<line x1="1348.6" y1="156.4" x2="1389.6" y2="156.4" stroke="#d6d6d6" stroke-width="1.5" stroke-linecap="butt"/>
<line x1="1348.6" y1="167.4" x2="1389.6" y2="167.4" stroke="#d6d6d6" stroke-width="1.5" stroke-linecap="butt"/>
<rect x="1355.5" y="156.4" width="37.5" height="11.0" fill="#5fb0ec" stroke="none" stroke-width="1.5" rx="0" />
<rect x="1365.5" y="157.6" width="26.5" height="8.6" fill="#1b7fd6" stroke="none" stroke-width="1.5" rx="0" />
<line x1="1378.6" y1="157.0" x2="1378.6" y2="167.0" stroke="#5fb0ec" stroke-width="1.2" stroke-linecap="butt"/>
<path d="M1366,161.9 H1346.2 M1354.6,152.6 L1345.6,161.9 L1354.6,171.2" fill="none" stroke="#4f9fe0" stroke-width="1.8" stroke-linejoin="round" stroke-linecap="round" />
<polyline points="1364.9,224.9 1368.3,228.8 1371.7,224.9" fill="none" stroke="#e6e6e6" stroke-width="2.0" stroke-linecap="round" stroke-linejoin="round"/>
<rect x="1413.4" y="146.0" width="41.0" height="31.6" fill="none" stroke="#d6d6d6" stroke-width="1.7" rx="0" />
<line x1="1427.1" y1="146.0" x2="1427.1" y2="177.6" stroke="#d6d6d6" stroke-width="1.5" stroke-linecap="butt"/>
<line x1="1440.6" y1="146.0" x2="1440.6" y2="177.6" stroke="#d6d6d6" stroke-width="1.5" stroke-linecap="butt"/>
<line x1="1413.4" y1="156.4" x2="1454.4" y2="156.4" stroke="#d6d6d6" stroke-width="1.5" stroke-linecap="butt"/>
<line x1="1413.4" y1="167.4" x2="1454.4" y2="167.4" stroke="#d6d6d6" stroke-width="1.5" stroke-linecap="butt"/>
<rect x="1440.0" y="154.5" width="16.0" height="15.0" fill="#292929" stroke="none" stroke-width="1.5" rx="0" />
<path d="M1418.7,156.4 H1438.5 L1444.2,161.9 L1438.5,167.4 H1418.7 Z" fill="#5fb0ec" stroke="none" stroke-width="1.6" stroke-linejoin="round" stroke-linecap="round" />
<path d="M1420,157.6 H1437.8 L1442.4,161.9 L1437.8,166.2 H1420 Z" fill="#1b7fd6" stroke="none" stroke-width="1.6" stroke-linejoin="round" stroke-linecap="round" />
<line x1="1432.7" y1="157.0" x2="1432.7" y2="167.0" stroke="#5fb0ec" stroke-width="1.2" stroke-linecap="butt"/>
<line x1="1440.3" y1="154.4" x2="1456.4" y2="171.0" stroke="#e0524f" stroke-width="2" stroke-linecap="round"/>
<line x1="1456.4" y1="154.4" x2="1440.3" y2="171.0" stroke="#e0524f" stroke-width="2" stroke-linecap="round"/>
<polyline points="1429.9,224.9 1433.3,228.8 1436.7,224.9" fill="none" stroke="#e6e6e6" stroke-width="2.0" stroke-linecap="round" stroke-linejoin="round"/>
<rect x="1479.2" y="146.0" width="41.0" height="31.6" fill="none" stroke="#d6d6d6" stroke-width="1.7" rx="0" />
<line x1="1489.7" y1="146.0" x2="1489.7" y2="177.6" stroke="#d6d6d6" stroke-width="1.5" stroke-linecap="butt"/>
<line x1="1510.7" y1="146.0" x2="1510.7" y2="177.6" stroke="#d6d6d6" stroke-width="1.5" stroke-linecap="butt"/>
<line x1="1479.2" y1="156.6" x2="1520.2" y2="156.6" stroke="#d6d6d6" stroke-width="1.5" stroke-linecap="butt"/>
<line x1="1479.2" y1="167.3" x2="1520.2" y2="167.3" stroke="#d6d6d6" stroke-width="1.5" stroke-linecap="butt"/>
<rect x="1490.4" y="156.6" width="20.3" height="10.7" fill="#5fb0ec" stroke="none" stroke-width="1.5" rx="0" />
<rect x="1491.6" y="157.8" width="17.9" height="8.3" fill="#1b7fd6" stroke="none" stroke-width="1.5" rx="0" />
<line x1="1488.6" y1="140.4" x2="1511.4" y2="140.4" stroke="#4f9fe0" stroke-width="1.7" stroke-linecap="butt"/>
<line x1="1488.9" y1="138.2" x2="1488.9" y2="142.8" stroke="#4f9fe0" stroke-width="1.7" stroke-linecap="butt"/>
<line x1="1511.1" y1="138.2" x2="1511.1" y2="142.8" stroke="#4f9fe0" stroke-width="1.7" stroke-linecap="butt"/>
<polyline points="1496.1,222.9 1499.4,226.8 1502.7,222.9" fill="none" stroke="#e6e6e6" stroke-width="2.0" stroke-linecap="round" stroke-linejoin="round"/>
<line x1="1544.5" y1="135.0" x2="1544.5" y2="269.0" stroke="#4d4d4d" stroke-width="1.2" stroke-linecap="butt"/>
<path d="M1583,145.5 V142.3 H1567 L1575.6,152 L1567,161.8 H1583 V158.5" fill="none" stroke="#d6d6d6" stroke-width="1.7" stroke-linejoin="round" stroke-linecap="round" />
<polyline points="1696.1,150.7 1699.1,154.4 1702.1,150.7" fill="none" stroke="#e6e6e6" stroke-width="2.0" stroke-linecap="round" stroke-linejoin="round"/>
<rect x="1564.0" y="182.0" width="22.0" height="18.4" fill="none" stroke="#d6d6d6" stroke-width="1.6" rx="0" />
<line x1="1564.0" y1="185.4" x2="1586.0" y2="185.4" stroke="#d6d6d6" stroke-width="1.4" stroke-linecap="butt"/>
<path d="M1575,188 V197 M1571,193.2 L1575,197.2 L1579,193.2" fill="none" stroke="#3a96dd" stroke-width="1.7" stroke-linejoin="round" stroke-linecap="round" />
<polyline points="1621.1,189.1 1624.1,192.8 1627.1,189.1" fill="none" stroke="#e6e6e6" stroke-width="2.0" stroke-linecap="round" stroke-linejoin="round"/>
<path d="M1564.5,232 L1577.5,219.5 L1585.5,227.5 L1572.5,240.2 Z" fill="none" stroke="#c86ad3" stroke-width="1.7" stroke-linejoin="round" stroke-linecap="round" />
<path d="M1564.5,232 L1568.8,227.8 L1576.8,235.8 L1572.5,240.2 Z" fill="#b44fc2" stroke="#c86ad3" stroke-width="1.2" stroke-linejoin="round" stroke-linecap="round" />
<polyline points="1639.7,227.7 1642.7,231.4 1645.7,227.7" fill="none" stroke="#e6e6e6" stroke-width="2.0" stroke-linecap="round" stroke-linejoin="round"/>
<path d="M1748.5,152.5 H1771.5 V155.5 L1763.5,165.5 V174.5 H1757 V165.5 L1748.5,155.5 Z" fill="none" stroke="#d6d6d6" stroke-width="1.7" stroke-linejoin="round" stroke-linecap="round" />
<polyline points="1769.1,223.1 1772.1,226.8 1775.1,223.1" fill="none" stroke="#e6e6e6" stroke-width="2.0" stroke-linecap="round" stroke-linejoin="round"/>
<circle cx="1826.5" cy="157" r="15" fill="none" stroke="#d6d6d6" stroke-width="1.7"/>
<line x1="1816.5" y1="168.5" x2="1799.5" y2="184.0" stroke="#d6d6d6" stroke-width="1.8" stroke-linecap="round"/>
<polyline points="1843.1,223.1 1846.1,226.8 1849.1,223.1" fill="none" stroke="#e6e6e6" stroke-width="2.0" stroke-linecap="round" stroke-linejoin="round"/>
<line x1="1868.3" y1="135.0" x2="1868.3" y2="269.0" stroke="#4d4d4d" stroke-width="1.2" stroke-linecap="butt"/>
<rect x="1895.5" y="141.0" width="40.5" height="41.8" fill="none" stroke="#b84a1c" stroke-width="2" rx="0" />
<rect x="1900.5" y="146.0" width="12.8" height="13.2" fill="none" stroke="#b84a1c" stroke-width="1.8" rx="0" />
<rect x="1918.5" y="146.0" width="12.8" height="13.2" fill="none" stroke="#b84a1c" stroke-width="1.8" rx="0" />
<rect x="1900.5" y="164.6" width="12.8" height="13.2" fill="none" stroke="#b84a1c" stroke-width="1.8" rx="0" />
<rect x="1918.5" y="164.6" width="12.8" height="13.2" fill="none" stroke="#b84a1c" stroke-width="1.8" rx="0" />
<rect x="1897.8" y="143.3" width="35.9" height="37.2" fill="none" stroke="#7a2f10" stroke-width="0.8" rx="0" />
<line x1="1963.4" y1="135.0" x2="1963.4" y2="269.0" stroke="#4d4d4d" stroke-width="1.2" stroke-linecap="butt"/>
<rect x="1989.5" y="141.6" width="40.5" height="40.5" fill="none" stroke="#d6d6d6" stroke-width="1.6" rx="0" />
<rect x="1989.5" y="141.6" width="40.5" height="5.0" fill="#767676" stroke="none" stroke-width="1.5" rx="0" />
<line x1="1989.5" y1="158.5" x2="2030.0" y2="158.5" stroke="#9a9a9a" stroke-width="1.2" stroke-linecap="butt"/>
<line x1="1989.5" y1="168.5" x2="2030.0" y2="168.5" stroke="#9a9a9a" stroke-width="1.2" stroke-linecap="butt"/>
<line x1="2003.0" y1="168.5" x2="2003.0" y2="182.0" stroke="#9a9a9a" stroke-width="1.2" stroke-linecap="butt"/>
<line x1="2016.5" y1="168.5" x2="2016.5" y2="182.0" stroke="#9a9a9a" stroke-width="1.2" stroke-linecap="butt"/>
<circle cx="2009.5" cy="159" r="12.5" fill="#292929" stroke="#d6d6d6" stroke-width="1.7"/>
<rect x="2002.0" y="156.5" width="3.5" height="7.5" fill="#8c8c8c" stroke="none" stroke-width="1.5" rx="0" />
<rect x="2006.5" y="151.5" width="3.8" height="12.5" fill="#c8c8c8" stroke="none" stroke-width="1.5" rx="0" />
<rect x="2011.3" y="154.0" width="3.8" height="10.0" fill="#2b88d8" stroke="none" stroke-width="1.5" rx="0" />
<line x1="2018.5" y1="168.5" x2="2030.5" y2="181.5" stroke="#d6d6d6" stroke-width="2" stroke-linecap="round"/>
<line x1="2056.8" y1="135.0" x2="2056.8" y2="269.0" stroke="#4d4d4d" stroke-width="1.2" stroke-linecap="butt"/>
<circle cx="2212.8" cy="198.5" r="56.5" fill="#fff"/>
<rect x="2182.0" y="172.8" width="61.0" height="53.2" fill="#5b62e6" stroke="none" stroke-width="1.5" rx="0" />
<rect x="2190.0" y="181.4" width="18.8" height="14.5" fill="#fff" stroke="none" stroke-width="1.5" rx="0" />
<rect x="2216.5" y="181.4" width="18.8" height="14.5" fill="#fff" stroke="none" stroke-width="1.5" rx="0" />
<rect x="2190.0" y="203.0" width="18.8" height="14.5" fill="#fff" stroke="none" stroke-width="1.5" rx="0" />
<rect x="2216.5" y="203.0" width="18.8" height="14.5" fill="#fff" stroke="none" stroke-width="1.5" rx="0" />
<rect x="2424.3" y="153.0" width="15.0" height="23.0" fill="#292929" stroke="none" stroke-width="1.5" rx="0" />
<rect x="2427.6" y="155.2" width="8.4" height="26.4" fill="#fff" stroke="none" stroke-width="1.5" rx="4.2" />
<polyline points="2851.4,253.8 2857.5,260.6 2863.6,253.8" fill="none" stroke="#e6e6e6" stroke-width="2" stroke-linecap="round" stroke-linejoin="round"/>
<polyline points="0.9,0.3 0.0,-0.2 -0.9,0.3" fill="none" stroke="#e6e6e6" stroke-width="2.0" stroke-linecap="round" stroke-linejoin="round"/>
<path d="M54.5,1686.6 L47.2,1693 L54.5,1699.4" fill="none" stroke="#8a8a8a" stroke-width="1.8" stroke-linejoin="round" stroke-linecap="round" />
<path d="M94.5,1686.6 L103.5,1693 L94.5,1699.4" fill="none" stroke="#d0d0d0" stroke-width="1.8" stroke-linejoin="round" stroke-linecap="round" />
<line x1="292.2" y1="1680.0" x2="292.2" y2="1708.0" stroke="#5a5a5a" stroke-width="1.2" stroke-linecap="butt"/>
<line x1="433.4" y1="1680.0" x2="433.4" y2="1708.0" stroke="#5a5a5a" stroke-width="1.2" stroke-linecap="butt"/>
<line x1="530.4" y1="1680.0" x2="530.4" y2="1708.0" stroke="#5a5a5a" stroke-width="1.2" stroke-linecap="butt"/>
<line x1="656.0" y1="1680.0" x2="656.0" y2="1708.0" stroke="#5a5a5a" stroke-width="1.2" stroke-linecap="butt"/>
<line x1="745.5" y1="1680.0" x2="745.5" y2="1708.0" stroke="#5a5a5a" stroke-width="1.2" stroke-linecap="butt"/>
<line x1="847.4" y1="1680.0" x2="847.4" y2="1708.0" stroke="#5a5a5a" stroke-width="1.2" stroke-linecap="butt"/>
<line x1="947.5" y1="1680.0" x2="947.5" y2="1708.0" stroke="#5a5a5a" stroke-width="1.2" stroke-linecap="butt"/>
<line x1="1073.7" y1="1680.0" x2="1073.7" y2="1708.0" stroke="#5a5a5a" stroke-width="1.2" stroke-linecap="butt"/>
<line x1="1176.4" y1="1680.0" x2="1176.4" y2="1708.0" stroke="#5a5a5a" stroke-width="1.2" stroke-linecap="butt"/>
<line x1="1231.6" y1="1680.0" x2="1231.6" y2="1708.0" stroke="#5a5a5a" stroke-width="1.2" stroke-linecap="butt"/>
<line x1="1292.5" y1="1680.0" x2="1292.5" y2="1708.0" stroke="#5a5a5a" stroke-width="1.2" stroke-linecap="butt"/>
<line x1="1353.3" y1="1680.0" x2="1353.3" y2="1708.0" stroke="#5a5a5a" stroke-width="1.2" stroke-linecap="butt"/>
<line x1="1481.2" y1="1680.0" x2="1481.2" y2="1708.0" stroke="#5a5a5a" stroke-width="1.2" stroke-linecap="butt"/>
<line x1="1609.4" y1="1680.0" x2="1609.4" y2="1708.0" stroke="#5a5a5a" stroke-width="1.2" stroke-linecap="butt"/>
<line x1="1736.9" y1="1680.0" x2="1736.9" y2="1708.0" stroke="#5a5a5a" stroke-width="1.2" stroke-linecap="butt"/>
<line x1="1797.3" y1="1680.0" x2="1797.3" y2="1708.0" stroke="#5a5a5a" stroke-width="1.2" stroke-linecap="butt"/>
<line x1="1882.0" y1="1680.0" x2="1882.0" y2="1708.0" stroke="#5a5a5a" stroke-width="1.2" stroke-linecap="butt"/>
<line x1="1980.5" y1="1680.0" x2="1980.5" y2="1708.0" stroke="#5a5a5a" stroke-width="1.2" stroke-linecap="butt"/>
<line x1="2057.4" y1="1680.0" x2="2057.4" y2="1708.0" stroke="#5a5a5a" stroke-width="1.2" stroke-linecap="butt"/>
<rect x="966" y="1703.8" width="88" height="3.2" fill="#1e8449"/>
<circle cx="2088.5" cy="1693" r="2.1" fill="#e6e6e6"/>
<circle cx="2095" cy="1693" r="2.1" fill="#e6e6e6"/>
<circle cx="2101.5" cy="1693" r="2.1" fill="#e6e6e6"/>
<line x1="2135.0" y1="1692.8" x2="2152.0" y2="1692.8" stroke="#e6e6e6" stroke-width="1.7" stroke-linecap="butt"/>
<line x1="2143.5" y1="1684.3" x2="2143.5" y2="1701.3" stroke="#e6e6e6" stroke-width="1.7" stroke-linecap="butt"/>
<circle cx="2191.5" cy="1688.8" r="1.7" fill="#e6e6e6"/>
<circle cx="2191.5" cy="1694.6" r="1.7" fill="#e6e6e6"/>
<circle cx="2191.5" cy="1700.4" r="1.7" fill="#e6e6e6"/>
<path d="M2233.8,1686.8 L2223.4,1693 L2233.8,1699.2 Z" fill="#9f9f9f" stroke="none" stroke-width="1.6" stroke-linejoin="round" stroke-linecap="round" />
<path d="M2842.8,1686.8 L2853.2,1693 L2842.8,1699.2 Z" fill="#9f9f9f" stroke="none" stroke-width="1.6" stroke-linejoin="round" stroke-linecap="round" />
<rect x="100.2" y="1727.0" width="19.0" height="16.6" fill="none" stroke="#e0e0e0" stroke-width="1.5" rx="1" />
<line x1="100.2" y1="1730.6" x2="119.2" y2="1730.6" stroke="#e0e0e0" stroke-width="1.4" stroke-linecap="butt"/>
<line x1="103.0" y1="1734.6" x2="107.5" y2="1734.6" stroke="#e0e0e0" stroke-width="1.3" stroke-linecap="butt"/>
<line x1="103.0" y1="1738.0" x2="107.5" y2="1738.0" stroke="#e0e0e0" stroke-width="1.3" stroke-linecap="butt"/>
<circle cx="114.6" cy="1739.4" r="5.2" fill="#141414" stroke="#e0e0e0" stroke-width="1.5"/><circle cx="114.6" cy="1739.4" r="2" fill="#e0e0e0"/>
<circle cx="156" cy="1729.4" r="2.4" fill="none" stroke="#e0e0e0" stroke-width="1.4"/>
<path d="M147.2,1732.2 L153.6,1734.6 H158.4 L164.8,1732.2 M153.6,1734.6 V1739 L150.2,1745.6 M158.4,1734.6 V1738 " fill="none" stroke="#e0e0e0" stroke-width="1.5" stroke-linejoin="round" stroke-linecap="round" />
<path d="M158.6,1738.2 L166.4,1746 M166.4,1738.2 L158.6,1746" fill="none" stroke="#e0e0e0" stroke-width="1.6" stroke-linejoin="round" stroke-linecap="round" />
<rect x="2465.2" y="1724.6" width="18.6" height="18.6" fill="none" stroke="#f0f0f0" stroke-width="1.6" rx="0" />
<line x1="2471.4" y1="1724.6" x2="2471.4" y2="1743.2" stroke="#f0f0f0" stroke-width="1.4" stroke-linecap="butt"/>
<line x1="2465.2" y1="1730.8" x2="2483.8" y2="1730.8" stroke="#f0f0f0" stroke-width="1.4" stroke-linecap="butt"/>
<line x1="2477.6" y1="1724.6" x2="2477.6" y2="1743.2" stroke="#f0f0f0" stroke-width="1.4" stroke-linecap="butt"/>
<line x1="2465.2" y1="1737.0" x2="2483.8" y2="1737.0" stroke="#f0f0f0" stroke-width="1.4" stroke-linecap="butt"/>
<rect x="2524.8" y="1724.6" width="19.6" height="18.6" fill="none" stroke="#f0f0f0" stroke-width="1.6" rx="0" />
<rect x="2529.6" y="1729.2" width="10.0" height="9.6" fill="none" stroke="#f0f0f0" stroke-width="1.4" rx="0" />
<line x1="2532.0" y1="1732.4" x2="2537.2" y2="1732.4" stroke="#f0f0f0" stroke-width="1.2" stroke-linecap="butt"/>
<line x1="2532.0" y1="1735.6" x2="2537.2" y2="1735.6" stroke="#f0f0f0" stroke-width="1.2" stroke-linecap="butt"/>
<rect x="2585.0" y="1724.6" width="19.6" height="18.6" fill="none" stroke="#f0f0f0" stroke-width="1.6" rx="0" />
<path d="M2591,1724.6 V1733.6 H2598.6 V1724.6" fill="none" stroke="#f0f0f0" stroke-width="1.5" stroke-linejoin="round" stroke-linecap="round" />
<line x1="2633.4" y1="1734.8" x2="2644.0" y2="1734.8" stroke="#e6e6e6" stroke-width="1.4" stroke-linecap="butt"/>
<line x1="2653.0" y1="1734.8" x2="2800.8" y2="1734.8" stroke="#8a8a8a" stroke-width="1.4" stroke-linecap="butt"/>
<rect x="2727.8" y="1726.0" width="7.6" height="17.4" fill="#bdbdbd" stroke="none" stroke-width="1.5" rx="1" />
<line x1="2809.8" y1="1734.8" x2="2820.0" y2="1734.8" stroke="#e6e6e6" stroke-width="1.4" stroke-linecap="butt"/>
<line x1="2814.9" y1="1729.6" x2="2814.9" y2="1740.0" stroke="#e6e6e6" stroke-width="1.4" stroke-linecap="butt"/>
<path d="M2869.6,295.6 L2876,285.2 L2882.4,295.6 Z" fill="#9f9f9f" stroke="none" stroke-width="1.6" stroke-linejoin="round" stroke-linecap="round" />
<path d="M2869.6,1652.4 L2876,1662.8 L2882.4,1652.4 Z" fill="#9f9f9f" stroke="none" stroke-width="1.6" stroke-linejoin="round" stroke-linecap="round" />
</svg>

</body></html>
